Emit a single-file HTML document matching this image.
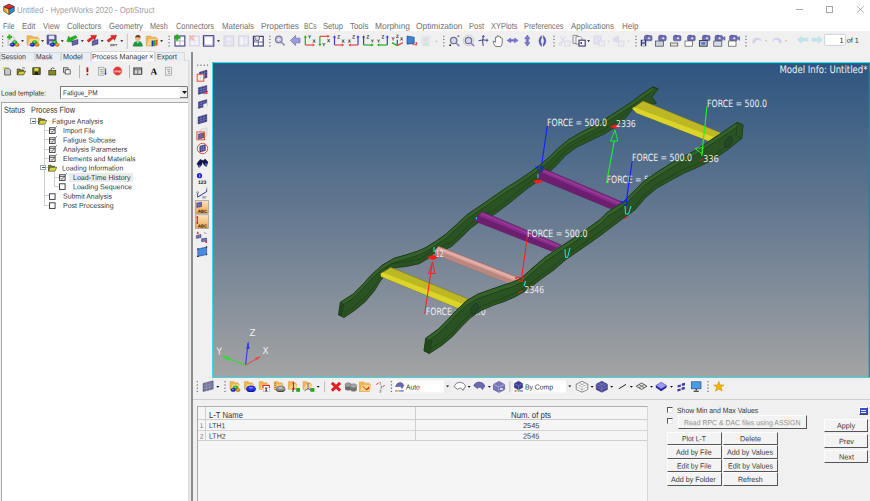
<!DOCTYPE html><html><head><meta charset="utf-8"><title>Untitled - HyperWorks 2020 - OptiStruct</title><style>
html,body{margin:0;padding:0;background:#f0f0f0;}
body{width:870px;height:501px;overflow:hidden;font-family:"Liberation Sans",sans-serif;}
#app{position:relative;width:870px;height:501px;overflow:hidden;background:#f0f0f0;}
#app div,#app svg{position:absolute;box-sizing:border-box;}
.t{position:absolute;white-space:nowrap;transform-origin:0 50%;}
.btn{background:#f3f3f3;border-top:1px solid #fdfdfd;border-left:1px solid #fdfdfd;border-right:1.1px solid #555;border-bottom:1.1px solid #555;}

</style></head><body>
<div id="app">
<div style="left:0px;top:0px;width:870px;height:31px;background:#fff;"></div>
<div style="left:796px;top:8.7px;width:6.8px;height:0.8px;background:#aaa;"></div>
<div style="left:826.2px;top:6.2px;width:6.8px;height:6.4px;border:0.8px solid #a4a4a4;border-radius:0.6px;"></div>
<svg style="left:856px;top:5px" width="10" height="10" viewBox="0 0 10 10"><path d="M1 1.2L7.8 7.6M7.8 1.2L1 7.6" stroke="#8c8c8c" stroke-width="0.7" fill="none"/></svg>
<div style="left:0px;top:52px;width:190px;height:9px;background:#f0f0f0;border-bottom:1px solid #dcdcdc;"></div>
<div style="left:0px;top:52px;width:35px;height:9px;background:#e9eef4;border:1px solid #d4dae2;border-bottom:none;"></div>
<div style="left:35px;top:52px;width:26px;height:9px;background:#e9eef4;border:1px solid #d4dae2;border-bottom:none;"></div>
<div style="left:61px;top:52px;width:30px;height:9px;background:#e9eef4;border:1px solid #d4dae2;border-bottom:none;"></div>
<div style="left:155px;top:52px;width:30px;height:9px;background:#e9eef4;border:1px solid #d4dae2;border-bottom:none;"></div>
<div style="left:91px;top:51px;width:64px;height:10px;background:#fff;border:1px solid #d9d9d9;border-bottom:none;"></div>
<div style="left:188px;top:60px;width:2px;height:441px;background:#dcdfe3;"></div>
<div style="left:191.2px;top:52px;width:1.8px;height:449px;background:#8c8c8c;"></div>
<div style="left:78.5px;top:65px;width:1px;height:13px;background:#b5b5b5;"></div>
<div style="left:129px;top:65px;width:1px;height:13px;background:#b5b5b5;"></div>
<div style="left:60px;top:85.5px;width:128px;height:13.5px;background:#fff;border:1px solid #7a7a7a;border-right-color:#d0d0d0;border-bottom-color:#d0d0d0;"></div>
<div style="left:180px;top:87px;width:7.5px;height:11px;background:#f0f0f0;border-right:1px solid #777;border-bottom:1px solid #777;"></div>
<svg style="left:181.5px;top:91px" width="5" height="3" viewBox="0 0 5 3"><path d="M0 0H5L2.5 3Z" fill="#111"/></svg>
<div style="left:1px;top:102px;width:187px;height:399px;background:#fff;border-left:1px solid #a8a8a8;border-top:1px solid #a8a8a8;"></div>
<div style="left:68.9px;top:172.8px;width:64px;height:9px;background:#ebebeb;"></div>
<div style="left:44px;top:125px;width:1px;height:80.5px;background:#cfcfcf;"></div>
<div style="left:44px;top:129.9px;width:5px;height:1px;background:#cfcfcf;"></div>
<div style="left:44px;top:139.2px;width:5px;height:1px;background:#cfcfcf;"></div>
<div style="left:44px;top:148.6px;width:5px;height:1px;background:#cfcfcf;"></div>
<div style="left:44px;top:157.9px;width:5px;height:1px;background:#cfcfcf;"></div>
<div style="left:44px;top:195.4px;width:5px;height:1px;background:#cfcfcf;"></div>
<div style="left:44px;top:204.7px;width:5px;height:1px;background:#cfcfcf;"></div>
<div style="left:54px;top:172px;width:1px;height:15px;background:#cfcfcf;"></div>
<div style="left:54px;top:177px;width:5px;height:1px;background:#cfcfcf;"></div>
<div style="left:54px;top:186.2px;width:5px;height:1px;background:#cfcfcf;"></div>
<div style="left:36px;top:120.5px;width:3px;height:1px;background:#cfcfcf;"></div>
<div style="left:46px;top:167.3px;width:3px;height:1px;background:#cfcfcf;"></div>
<div style="left:30.2px;top:118.2px;width:5.6px;height:5.6px;background:#fff;border:1px solid #9aa;"></div>
<div style="left:31.5px;top:120.6px;width:3px;height:0.8px;background:#357;"></div>
<div style="left:40.2px;top:164.89999999999998px;width:5.6px;height:5.6px;background:#fff;border:1px solid #9aa;"></div>
<div style="left:41.5px;top:167.29999999999998px;width:3px;height:0.8px;background:#357;"></div>
<svg style="left:38px;top:117px" width="9" height="8" viewBox="0 0 9 8"><path d="M0.3 1.2H3L3.8 2.2H6.5V3.3H2.2L0.3 7Z" fill="#8a8a10" stroke="#333" stroke-width="0.6"/><path d="M2.2 3.3H8.8L6.8 7.2H0.3Z" fill="#d8d83a" stroke="#333" stroke-width="0.6"/></svg>
<svg style="left:48px;top:163.7px" width="9" height="8" viewBox="0 0 9 8"><path d="M0.3 1.2H3L3.8 2.2H6.5V3.3H2.2L0.3 7Z" fill="#8a8a10" stroke="#333" stroke-width="0.6"/><path d="M2.2 3.3H8.8L6.8 7.2H0.3Z" fill="#d8d83a" stroke="#333" stroke-width="0.6"/></svg>
<svg style="left:48.6px;top:126.2px" width="8.5" height="8" viewBox="0 0 8.5 8"><rect x="0.5" y="1.8" width="5.6" height="5.6" fill="#fff" stroke="#333" stroke-width="0.9"/><path d="M0.5 3.6H6M1.8 5.2L3 6.4L5 4.2" stroke="#333" stroke-width="0.8" fill="none"/><path d="M6.5 1.6L7.8 0.4" stroke="#333" stroke-width="0.8"/></svg>
<svg style="left:48.6px;top:135.5px" width="8.5" height="8" viewBox="0 0 8.5 8"><rect x="0.5" y="1.8" width="5.6" height="5.6" fill="#fff" stroke="#333" stroke-width="0.9"/><path d="M0.5 3.6H6M1.8 5.2L3 6.4L5 4.2" stroke="#333" stroke-width="0.8" fill="none"/><path d="M6.5 1.6L7.8 0.4" stroke="#333" stroke-width="0.8"/></svg>
<svg style="left:48.6px;top:144.9px" width="8.5" height="8" viewBox="0 0 8.5 8"><rect x="0.5" y="1.8" width="5.6" height="5.6" fill="#fff" stroke="#333" stroke-width="0.9"/><path d="M0.5 3.6H6M1.8 5.2L3 6.4L5 4.2" stroke="#333" stroke-width="0.8" fill="none"/><path d="M6.5 1.6L7.8 0.4" stroke="#333" stroke-width="0.8"/></svg>
<svg style="left:48.6px;top:154.20000000000002px" width="8.5" height="8" viewBox="0 0 8.5 8"><rect x="0.5" y="1.8" width="5.6" height="5.6" fill="#fff" stroke="#333" stroke-width="0.9"/><path d="M0.5 3.6H6M1.8 5.2L3 6.4L5 4.2" stroke="#333" stroke-width="0.8" fill="none"/><path d="M6.5 1.6L7.8 0.4" stroke="#333" stroke-width="0.8"/></svg>
<svg style="left:58.6px;top:173.10000000000002px" width="8.5" height="8" viewBox="0 0 8.5 8"><rect x="0.5" y="1.8" width="5.6" height="5.6" fill="#fff" stroke="#333" stroke-width="0.9"/><path d="M0.5 3.6H6M1.8 5.2L3 6.4L5 4.2" stroke="#333" stroke-width="0.8" fill="none"/><path d="M6.5 1.6L7.8 0.4" stroke="#333" stroke-width="0.8"/></svg>
<svg style="left:58.6px;top:182.4px" width="8.5" height="8" viewBox="0 0 8.5 8"><rect x="0.5" y="1.8" width="5.6" height="5.6" fill="#fff" stroke="#333" stroke-width="0.9"/></svg>
<svg style="left:48.6px;top:191.70000000000002px" width="8.5" height="8" viewBox="0 0 8.5 8"><rect x="0.5" y="1.8" width="5.6" height="5.6" fill="#fff" stroke="#333" stroke-width="0.9"/></svg>
<svg style="left:48.6px;top:201.0px" width="8.5" height="8" viewBox="0 0 8.5 8"><rect x="0.5" y="1.8" width="5.6" height="5.6" fill="#fff" stroke="#333" stroke-width="0.9"/></svg>
<svg style="left:212px;top:62px" width="658" height="316" viewBox="0 0 658 316" font-family="'DejaVu Sans','Liberation Sans',sans-serif"><defs><linearGradient id="bg" x1="0" y1="0" x2="0" y2="1"><stop offset="0" stop-color="#2d5580"/><stop offset="0.5" stop-color="#677a91"/><stop offset="1" stop-color="#a3a4a4"/></linearGradient></defs><rect x="0" y="0" width="658" height="316" fill="url(#bg)"/><path d="M658 0.5H0.5V315.5H658" fill="none" stroke="#38d8e2" stroke-width="1"/><path d="M1 1.5H658" fill="none" stroke="#236f8c" stroke-width="1" opacity="0.8"/><path d="M657.3 1V315" fill="none" stroke="#2a8098" stroke-width="1.2"/><text x="394.5" y="121.10" transform="rotate(0.03 394.5 117.5)" font-size="10" fill="#ececec" textLength="60.0" lengthAdjust="spacingAndGlyphs">FORCE = 500.0</text><text x="213.8" y="252.60" transform="rotate(0.03 213.8 249.0)" font-size="10" fill="#ececec" textLength="59.8" lengthAdjust="spacingAndGlyphs">FORCE = 500.0</text><polygon points="128.4,240.3 141.0,232.2 150.0,223.3 159.0,213.4 169.7,203.5 182.2,196.3 194.8,192.7 205.6,189.2 213.0,186.0 223.5,179.5 234.5,171.7 245.3,161.9 256.0,152.0 266.9,144.8 281.2,134.9 295.6,125.0 303.0,120.6 313.8,113.4 326.3,104.4 337.0,95.5 346.0,86.5 356.9,77.5 369.4,70.3 382.0,64.0 392.6,57.5 406.7,48.4 419.3,40.3 430.0,32.2 440.8,25.0 446.2,26.9 440.0,35.0 444.4,41.2 433.0,44.0 420.2,47.5 414.0,55.6 405.0,63.7 392.6,71.8 378.4,78.6 364.0,85.6 353.3,93.7 344.3,103.5 333.0,114.0 313.8,127.8 297.4,141.2 283.0,152.0 266.0,160.8 259.0,165.9 249.3,175.5 239.5,184.6 231.0,188.5 220.8,192.0 216.4,196.3 207.4,201.7 194.8,204.4 178.7,206.3 167.9,219.7 162.5,228.7 153.5,239.4 142.7,248.4 132.0,255.6 126.6,252.9" fill="#2a5222" stroke="#1b3a17" stroke-width="0.8" stroke-linejoin="round"/><polygon points="128.4,240.3 141.0,232.2 150.0,223.3 159.0,213.4 169.7,203.5 182.2,196.3 194.8,192.7 205.6,189.2 213.0,186.0 223.5,179.5 234.5,171.7 245.3,161.9 256.0,152.0 266.9,144.8 281.2,134.9 295.6,125.0 303.0,120.6 313.8,113.4 326.3,104.4 337.0,95.5 346.0,86.5 356.9,77.5 369.4,70.3 382.0,64.0 392.6,57.5 406.7,48.4 419.3,40.3 430.0,32.2 440.8,25.0 440.8,29.2 430.0,36.4 419.3,44.5 406.7,52.6 392.6,61.7 382.0,68.2 369.4,74.5 356.9,81.7 346.0,90.7 337.0,99.7 326.3,108.6 313.8,117.6 303.0,124.8 295.6,129.2 281.2,139.1 266.9,149.0 256.0,156.2 245.3,166.1 234.5,175.9 223.5,183.7 213.0,190.2 205.6,193.4 194.8,196.9 182.2,200.5 169.7,207.7 159.0,217.6 150.0,227.5 141.0,236.4 128.4,244.5" fill="#34622a" stroke="none" stroke-width="0.6" stroke-linejoin="round"/><polyline points="128.4,244.5 141.0,236.4 150.0,227.5 159.0,217.6 169.7,207.7 182.2,200.5 194.8,196.9 205.6,193.4 213.0,190.2 223.5,183.7 234.5,175.9 245.3,166.1 256.0,156.2 266.9,149.0 281.2,139.1 295.6,129.2 303.0,124.8 313.8,117.6 326.3,108.6 337.0,99.7 346.0,90.7 356.9,81.7 369.4,74.5 382.0,68.2 392.6,61.7 406.7,52.6 419.3,44.5 430.0,36.4 440.8,29.2" fill="none" stroke="#1b3a17" stroke-width="0.7" stroke-linejoin="round"/><polyline points="128.4,240.3 141.0,232.2 150.0,223.3 159.0,213.4 169.7,203.5 182.2,196.3 194.8,192.7 205.6,189.2 213.0,186.0 223.5,179.5 234.5,171.7 245.3,161.9 256.0,152.0 266.9,144.8 281.2,134.9 295.6,125.0 303.0,120.6 313.8,113.4 326.3,104.4 337.0,95.5 346.0,86.5 356.9,77.5 369.4,70.3 382.0,64.0 392.6,57.5 406.7,48.4 419.3,40.3 430.0,32.2 440.8,25.0 446.2,26.9" fill="none" stroke="#1b3a17" stroke-width="0.8" stroke-linejoin="round"/><polyline points="420.2,43.0 414.0,51.1 405.0,59.2 392.6,67.3 378.4,74.1 364.0,81.1 353.3,89.2 344.3,99.0 333.0,109.5 313.8,123.3 297.4,136.7 283.0,147.5 266.0,156.3 259.0,161.4 249.3,171.0 239.5,180.1 231.0,184.0 220.8,187.5 216.4,191.8 207.4,197.2 194.8,199.9 178.7,201.8 167.9,215.2 162.5,224.2 153.5,234.9 142.7,243.9 132.0,251.1" fill="none" stroke="#1b3a17" stroke-width="0.6" stroke-linejoin="round"/><polygon points="128.4,240.3 131.5,242.0 130.0,253.5 126.6,252.9" fill="#23481d" stroke="#1b3a17" stroke-width="0.5" stroke-linejoin="round"/><polygon points="332.6,107.0 410.0,140.0 399.5,147.0 327.2,117.0 325.4,113.4" fill="#8a2a8c" stroke="#4a154c" stroke-width="0.5" stroke-linejoin="round"/><polygon points="329.0,110.3 405.0,143.5 399.5,147.0 327.2,117.0 325.4,113.4" fill="#6c1f6e" stroke="none" stroke-width="0.6" stroke-linejoin="round"/><line x1="331.0" y1="108.5" x2="408.0" y2="141.6" stroke="#a855aa" stroke-width="0.6"/><polygon points="270.5,149.7 349.0,182.9 340.0,189.2 263.3,159.2 261.8,157.4" fill="#8a2a8c" stroke="#4a154c" stroke-width="0.5" stroke-linejoin="round"/><polygon points="266.0,153.5 344.5,186.0 340.0,189.2 263.3,159.2 261.8,157.4" fill="#6c1f6e" stroke="none" stroke-width="0.6" stroke-linejoin="round"/><line x1="269.0" y1="151.3" x2="347.0" y2="184.5" stroke="#a855aa" stroke-width="0.6"/><polygon points="226.5,184.3 309.0,216.5 300.0,222.5 223.5,192.5 222.5,189.0" fill="#d9a29c" stroke="#8a5a56" stroke-width="0.5" stroke-linejoin="round"/><polygon points="224.5,188.0 304.5,219.5 300.0,222.5 223.5,192.5" fill="#b98680" stroke="none" stroke-width="0.6" stroke-linejoin="round"/><line x1="225.5" y1="186.2" x2="307.0" y2="218.0" stroke="#f0c8c2" stroke-width="0.6"/><polygon points="431.0,38.9 510.0,71.2 500.0,80.2 424.7,51.0 420.2,46.6" fill="#bdb724" stroke="#6f6c18" stroke-width="0.5" stroke-linejoin="round"/><polygon points="422.0,45.3 504.5,76.0 500.0,80.2 424.7,51.0 420.2,46.6" fill="#dbd52a" stroke="none" stroke-width="0.6" stroke-linejoin="round"/><polygon points="178.7,205.3 257.8,237.6 247.0,246.6 169.0,214.5 168.8,211.6" fill="#bdb724" stroke="#6f6c18" stroke-width="0.5" stroke-linejoin="round"/><polygon points="171.0,210.6 251.5,242.0 247.0,246.6 169.0,214.5 168.8,211.6" fill="#dbd52a" stroke="none" stroke-width="0.6" stroke-linejoin="round"/><polygon points="213.8,276.2 226.3,267.2 235.3,258.3 244.3,248.4 255.0,238.5 265.8,232.2 278.4,227.7 291.0,223.3 300.0,220.5 309.5,216.0 320.3,206.2 332.9,195.5 347.2,185.6 359.8,177.5 374.2,167.6 388.0,157.7 396.0,149.8 410.3,140.8 422.9,128.3 431.9,119.3 440.8,113.0 453.4,105.0 466.0,97.2 483.9,88.3 498.3,78.4 510.8,70.3 525.2,60.4 531.0,63.1 529.7,76.6 516.2,87.4 501.9,97.2 487.5,104.4 471.3,111.6 457.0,119.3 444.4,126.5 433.7,135.5 422.9,148.0 410.3,157.0 396.0,167.8 388.0,173.9 368.8,187.4 354.4,197.2 341.9,208.0 329.3,217.0 315.0,228.0 303.0,234.9 292.8,239.4 282.0,243.0 269.4,248.4 258.7,255.6 249.7,264.6 240.7,274.4 229.9,283.4 217.4,291.5 212.0,288.8" fill="#2a5222" stroke="#1b3a17" stroke-width="0.8" stroke-linejoin="round"/><polygon points="213.8,276.2 226.3,267.2 235.3,258.3 244.3,248.4 255.0,238.5 265.8,232.2 278.4,227.7 291.0,223.3 300.0,220.5 309.5,216.0 320.3,206.2 332.9,195.5 347.2,185.6 359.8,177.5 374.2,167.6 388.0,157.7 396.0,149.8 410.3,140.8 422.9,128.3 431.9,119.3 440.8,113.0 453.4,105.0 466.0,97.2 483.9,88.3 498.3,78.4 510.8,70.3 525.2,60.4 525.2,64.9 510.8,74.8 498.3,82.9 483.9,92.8 466.0,101.7 453.4,109.5 440.8,117.5 431.9,123.8 422.9,132.8 410.3,145.3 396.0,154.3 388.0,162.2 374.2,172.1 359.8,182.0 347.2,190.1 332.9,200.0 320.3,210.7 309.5,220.5 300.0,225.0 291.0,227.8 278.4,232.2 265.8,236.7 255.0,243.0 244.3,252.9 235.3,262.8 226.3,271.7 213.8,280.7" fill="#34622a" stroke="none" stroke-width="0.6" stroke-linejoin="round"/><polyline points="213.8,280.7 226.3,271.7 235.3,262.8 244.3,252.9 255.0,243.0 265.8,236.7 278.4,232.2 291.0,227.8 300.0,225.0 309.5,220.5 320.3,210.7 332.9,200.0 347.2,190.1 359.8,182.0 374.2,172.1 388.0,162.2 396.0,154.3 410.3,145.3 422.9,132.8 431.9,123.8 440.8,117.5 453.4,109.5 466.0,101.7 483.9,92.8 498.3,82.9 510.8,74.8 525.2,64.9" fill="none" stroke="#1b3a17" stroke-width="0.7" stroke-linejoin="round"/><polyline points="213.8,276.2 226.3,267.2 235.3,258.3 244.3,248.4 255.0,238.5 265.8,232.2 278.4,227.7 291.0,223.3 300.0,220.5 309.5,216.0 320.3,206.2 332.9,195.5 347.2,185.6 359.8,177.5 374.2,167.6 388.0,157.7 396.0,149.8 410.3,140.8 422.9,128.3 431.9,119.3 440.8,113.0 453.4,105.0 466.0,97.2 483.9,88.3 498.3,78.4 510.8,70.3 525.2,60.4 531.0,63.1" fill="none" stroke="#1b3a17" stroke-width="0.8" stroke-linejoin="round"/><polyline points="516.2,83.4 501.9,93.2 487.5,100.4 471.3,107.6 457.0,115.3 444.4,122.5 433.7,131.5 422.9,144.0 410.3,153.0 396.0,163.8 388.0,169.9 368.8,183.4 354.4,193.2 341.9,204.0 329.3,213.0 315.0,224.0 303.0,230.9 292.8,235.4 282.0,239.0 269.4,244.4 258.7,251.6 249.7,260.6 240.7,270.4 229.9,279.4 217.4,287.5" fill="none" stroke="#1b3a17" stroke-width="0.6" stroke-linejoin="round"/><polygon points="213.8,276.2 217.4,278.9 220.0,278.0 217.4,291.5 212.0,288.8" fill="#23481d" stroke="#1b3a17" stroke-width="0.5" stroke-linejoin="round"/><polygon points="525.2,60.4 531.0,63.1 529.7,76.6 524.0,73.5" fill="#2a5222" stroke="#1b3a17" stroke-width="0.5" stroke-linejoin="round"/><ellipse cx="262.5" cy="247" rx="3.2" ry="5.8" transform="rotate(28 262.5 247)" fill="#25491f" stroke="#1b2f4a" stroke-width="0.6"/><ellipse cx="516.5" cy="80" rx="3.2" ry="5.8" transform="rotate(28 516.5 80)" fill="#25491f" stroke="#1b2f4a" stroke-width="0.6"/><line x1="335.3" y1="64.0" x2="329.0" y2="107.0" stroke="#1020ff" stroke-width="1.1"/><polygon points="323.6,105.0 331.7,105.0 329.0,110.0" fill="none" stroke="#1020ff" stroke-width="0.9" stroke-linejoin="round"/><polygon points="321.0,119.0 327.0,117.5 331.0,119.5 325.0,122.0" fill="#ff1a1a" stroke="none" stroke-width="0.6" stroke-linejoin="round"/><line x1="326.0" y1="112.0" x2="326.0" y2="116.0" stroke="#22e6e6" stroke-width="1"/><line x1="420.2" y1="99.0" x2="414.0" y2="140.8" stroke="#1020ff" stroke-width="1.1"/><polygon points="408.5,139.5 416.6,139.5 414.0,144.0" fill="none" stroke="#1020ff" stroke-width="0.9" stroke-linejoin="round"/><path d="M413 144L413.5 152L416.5 152L419 144" fill="none" stroke="#22e6e6" stroke-width="1"/><line x1="412.0" y1="156.5" x2="416.6" y2="155.0" stroke="#ff1a1a" stroke-width="1"/><line x1="394.5" y1="121.0" x2="402.3" y2="79.0" stroke="#22ee22" stroke-width="1.2"/><polygon points="403.0,68.0 398.6,79.0 405.8,79.0" fill="none" stroke="#22ee22" stroke-width="1.0" stroke-linejoin="round"/><polygon points="397.7,64.5 403.0,62.6 408.5,64.5 403.0,66.5" fill="#ff1a1a" stroke="none" stroke-width="0.6" stroke-linejoin="round"/><line x1="495.0" y1="44.3" x2="489.7" y2="93.7" stroke="#22ee22" stroke-width="1.2"/><polygon points="483.0,86.5 491.0,85.5 490.3,91.9" fill="none" stroke="#22ee22" stroke-width="1.0" stroke-linejoin="round"/><line x1="488.0" y1="99.0" x2="491.0" y2="97.0" stroke="#ff1a1a" stroke-width="1"/><line x1="315.3" y1="174.8" x2="309.5" y2="217.0" stroke="#ff1a1a" stroke-width="1.0"/><polygon points="303.0,216.0 312.0,215.0 310.0,220.0" fill="none" stroke="#ff1a1a" stroke-width="0.9" stroke-linejoin="round"/><line x1="313.5" y1="219.0" x2="312.0" y2="224.0" stroke="#22e6e6" stroke-width="1.1"/><line x1="306.0" y1="231.0" x2="310.0" y2="229.0" stroke="#ff1a1a" stroke-width="1"/><line x1="212.7" y1="251.6" x2="220.3" y2="201.0" stroke="#ff1a1a" stroke-width="1.0"/><polygon points="220.5,200.0 216.5,211.4 223.0,211.4" fill="none" stroke="#ff1a1a" stroke-width="0.9" stroke-linejoin="round"/><polygon points="215.0,195.5 221.0,193.0 227.0,195.0 221.0,198.0" fill="#ff1a1a" stroke="none" stroke-width="0.6" stroke-linejoin="round"/><line x1="222.0" y1="185.0" x2="222.0" y2="190.0" stroke="#22e6e6" stroke-width="1"/><line x1="264.3" y1="155.0" x2="264.3" y2="157.5" stroke="#22e6e6" stroke-width="1"/><path d="M353 187L353.5 195.5L355.5 195.5L358 186" fill="none" stroke="#22e6e6" stroke-width="1"/><text x="335.0" y="63.50" transform="rotate(0.03 335.0 59.9)" font-size="10" fill="#ececec" textLength="60.0" lengthAdjust="spacingAndGlyphs">FORCE = 500.0</text><text x="495.0" y="44.80" transform="rotate(0.03 495.0 41.2)" font-size="10" fill="#ececec" textLength="60.0" lengthAdjust="spacingAndGlyphs">FORCE = 500.0</text><text x="420.0" y="98.90" transform="rotate(0.03 420.0 95.3)" font-size="10" fill="#ececec" textLength="60.0" lengthAdjust="spacingAndGlyphs">FORCE = 500.0</text><text x="315.0" y="174.80" transform="rotate(0.03 315.0 171.2)" font-size="10" fill="#ececec" textLength="60.4" lengthAdjust="spacingAndGlyphs">FORCE = 500.0</text><text x="404.0" y="64.72" transform="rotate(0.03 404.0 61.3)" font-size="9.5" fill="#ececec" textLength="19.8" lengthAdjust="spacingAndGlyphs">2336</text><text x="491.0" y="100.32" transform="rotate(0.03 491.0 96.9)" font-size="9.5" fill="#ececec" textLength="15.9" lengthAdjust="spacingAndGlyphs">336</text><text x="312.6" y="230.92" transform="rotate(0.03 312.6 227.5)" font-size="9.5" fill="#ececec" textLength="19.4" lengthAdjust="spacingAndGlyphs">2346</text><text x="223.8" y="194.92" transform="rotate(0.03 223.8 191.5)" font-size="9.5" fill="#ececec" textLength="7.7" lengthAdjust="spacingAndGlyphs">12</text><text x="567.4" y="10.97" transform="rotate(0.03 567.4 7.3)" font-size="10.2" fill="#f2f2f2" textLength="88.1" lengthAdjust="spacingAndGlyphs">Model Info: Untitled*</text><line x1="33.6" y1="303.0" x2="36.0" y2="281.0" stroke="#2a3cf0" stroke-width="1.1"/><polygon points="36.2,279.0 34.3,287.0 37.6,287.0" fill="#2a3cf0" stroke="none" stroke-width="0.6" stroke-linejoin="round"/><line x1="33.6" y1="303.0" x2="10.5" y2="294.4" stroke="#2fdc2f" stroke-width="1.1"/><polygon points="9.3,293.8 17.5,295.0 16.3,298.6" fill="#2fdc2f" stroke="none" stroke-width="0.6" stroke-linejoin="round"/><line x1="33.6" y1="303.0" x2="48.0" y2="295.0" stroke="#e25050" stroke-width="1.1"/><polygon points="49.0,294.5 43.0,295.5 44.5,298.5" fill="#e25050" stroke="none" stroke-width="0.6" stroke-linejoin="round"/><text x="37.5" y="274.42" transform="rotate(0.03 37.5 271.0)" font-size="9.5" fill="#f0f0f0" textLength="6.0" lengthAdjust="spacingAndGlyphs">Z</text><text x="4.5" y="292.42" transform="rotate(0.03 4.5 289.0)" font-size="9.5" fill="#f0f0f0" textLength="5.5" lengthAdjust="spacingAndGlyphs">Y</text><text x="50.5" y="292.42" transform="rotate(0.03 50.5 289.0)" font-size="9.5" fill="#f0f0f0" textLength="6.0" lengthAdjust="spacingAndGlyphs">X</text></svg>
<div style="left:193px;top:399px;width:677px;height:1px;background:#cfcfcf;"></div>
<div style="left:197px;top:406px;width:450.5px;height:95px;background:#f5f5f5;border-left:1px solid #a8a8a8;border-top:1px solid #b0b0b0;border-right:1px solid #d8d8d8;"></div>
<div style="left:198px;top:419.2px;width:449px;height:1px;background:#cdcdcd;"></div>
<div style="left:198px;top:429.6px;width:449px;height:1px;background:#d4d4d4;"></div>
<div style="left:198px;top:440px;width:449px;height:1px;background:#cfcfcf;"></div>
<div style="left:205.2px;top:407px;width:1px;height:33.5px;background:#cfcfcf;"></div>
<div style="left:414.7px;top:407px;width:1px;height:33.5px;background:#cfcfcf;"></div>
<div style="left:667px;top:407px;width:6.2px;height:6.2px;background:#fff;border-top:1px solid #555;border-left:1px solid #555;border-right:1px solid #e8e8e8;border-bottom:1px solid #e8e8e8;"></div>
<div style="left:667px;top:417.6px;width:6.2px;height:6.2px;background:#fff;border-top:1px solid #555;border-left:1px solid #555;border-right:1px solid #e8e8e8;border-bottom:1px solid #e8e8e8;"></div>
<div class="btn" style="left:678px;top:415.4px;width:129.29999999999995px;height:13.400000000000034px"></div>
<div class="btn" style="left:667px;top:431.6px;width:54.5px;height:13.399999999999977px"></div>
<div class="btn" style="left:723.3px;top:431.6px;width:54.700000000000045px;height:13.399999999999977px"></div>
<div class="btn" style="left:667px;top:445.2px;width:54.5px;height:13.400000000000034px"></div>
<div class="btn" style="left:723.3px;top:445.2px;width:54.700000000000045px;height:13.400000000000034px"></div>
<div class="btn" style="left:667px;top:458.8px;width:54.5px;height:13.399999999999977px"></div>
<div class="btn" style="left:723.3px;top:458.8px;width:54.700000000000045px;height:13.399999999999977px"></div>
<div class="btn" style="left:667px;top:472.4px;width:54.5px;height:13.400000000000034px"></div>
<div class="btn" style="left:723.3px;top:472.4px;width:54.700000000000045px;height:13.400000000000034px"></div>
<div class="btn" style="left:823.5px;top:418.8px;width:44.700000000000045px;height:13.199999999999989px"></div>
<div class="btn" style="left:823.5px;top:434.4px;width:44.700000000000045px;height:13.200000000000045px"></div>
<div class="btn" style="left:823.5px;top:449.9px;width:44.700000000000045px;height:13.200000000000045px"></div>
<div style="left:859px;top:406.6px;width:8.5px;height:8.7px;background:#3c50c8;border-top:1px solid #fff;border-left:1px solid #fff;border-right:1px solid #444;border-bottom:1px solid #444;"></div>
<div style="left:860.5px;top:409.5px;width:5px;height:1px;background:#dfe6ff;"></div>
<div style="left:860.5px;top:411.5px;width:5px;height:1px;background:#dfe6ff;"></div>
<svg style="left:0;top:0" width="870" height="501" viewBox="0 0 870 501" font-family="'Liberation Sans',sans-serif"><path d="M9 4.1L14.3 6.4V11.2L9 14.8L3.7 11.2V6.4Z" fill="#333" stroke="#333" stroke-width="0.5" opacity="1" /><path d="M9 4.4L13.8 6.5L9 8.8L4.2 6.5Z" fill="#e02626" stroke="none" stroke-width="0.7" opacity="1" /><path d="M9.4 9.4L13.9 7.2V11L9.4 14.2Z" fill="#2a8ad8" stroke="none" stroke-width="0.7" opacity="1" /><path d="M8.6 9.4L4.1 7.2V11L8.6 14.2Z" fill="#f0b020" stroke="none" stroke-width="0.7" opacity="1" /><path d="M7 8.6Q8 11 7 13" fill="none" stroke="#fff" stroke-width="0.7" opacity="0.7" /><rect x="2.0" y="35.7" width="1.2" height="1.2" fill="#6e6e6e" stroke="none" stroke-width="0.6" rx="0" opacity="1"/><rect x="2.0" y="38.8" width="1.2" height="1.2" fill="#6e6e6e" stroke="none" stroke-width="0.6" rx="0" opacity="1"/><rect x="2.0" y="42.1" width="1.2" height="1.2" fill="#6e6e6e" stroke="none" stroke-width="0.6" rx="0" opacity="1"/><rect x="2.0" y="45.4" width="1.2" height="1.2" fill="#6e6e6e" stroke="none" stroke-width="0.6" rx="0" opacity="1"/><path d="M8 36H12.5L14.8 38.3V45.3H8Z" fill="#e6e6ea" stroke="#9a9aa6" stroke-width="0.5" opacity="1" /><path d="M9.5 34.6V39.6M7 37.1H12" fill="none" stroke="#35b020" stroke-width="1.9" opacity="1" /><ellipse cx="14.7" cy="42.3" rx="2.4" ry="1.7" fill="#1cc41c" stroke="#0a7a0a" stroke-width="0.4"/><ellipse cx="14.4" cy="41.8" rx="1.0" ry="0.5" fill="#8af08a" stroke="none" stroke-width="0.4"/><ellipse cx="12.4" cy="44.7" rx="2.4" ry="1.7" fill="#1a24dc" stroke="#0a0a80" stroke-width="0.4"/><ellipse cx="12.1" cy="44.2" rx="1.0" ry="0.5" fill="#8a90f8" stroke="none" stroke-width="0.4"/><ellipse cx="17.1" cy="44.8" rx="2.2" ry="1.6" fill="#e08a10" stroke="#8a5008" stroke-width="0.4"/><ellipse cx="16.8" cy="44.3" rx="0.9" ry="0.45" fill="#f8d08a" stroke="none" stroke-width="0.4"/><path d="M21.0 40.3H24.0L22.5 42.1Z" fill="#111" stroke="none" stroke-width="0.7" opacity="1" /><path d="M27 35.8H32.0L33.25 37.0H37.625V45.0H27Z" fill="#f0b850" stroke="#c89030" stroke-width="0.4" opacity="1" /><path d="M27.3 45.0L29.5 38.3H39.5L37.625 45.0Z" fill="#fbd987" stroke="#d8a040" stroke-width="0.4" opacity="1" /><ellipse cx="34.7" cy="42.3" rx="2.4" ry="1.7" fill="#1cc41c" stroke="#0a7a0a" stroke-width="0.4"/><ellipse cx="34.4" cy="41.8" rx="1.0" ry="0.5" fill="#8af08a" stroke="none" stroke-width="0.4"/><ellipse cx="32.4" cy="44.7" rx="2.4" ry="1.7" fill="#1a24dc" stroke="#0a0a80" stroke-width="0.4"/><ellipse cx="32.1" cy="44.2" rx="1.0" ry="0.5" fill="#8a90f8" stroke="none" stroke-width="0.4"/><ellipse cx="37.1" cy="44.8" rx="2.2" ry="1.6" fill="#e08a10" stroke="#8a5008" stroke-width="0.4"/><ellipse cx="36.8" cy="44.3" rx="0.9" ry="0.45" fill="#f8d08a" stroke="none" stroke-width="0.4"/><path d="M41.0 40.3H44.0L42.5 42.1Z" fill="#111" stroke="none" stroke-width="0.7" opacity="1" /><rect x="47.0" y="35.0" width="9.2" height="9.3" fill="#5a5aa6" stroke="#3a3a7a" stroke-width="0.5" rx="0.6" opacity="1"/><rect x="48.8" y="35.6" width="5.6" height="3.6" fill="#e4e4f4" stroke="none" stroke-width="0.6" rx="0" opacity="1"/><rect x="49.3" y="41.2" width="4.2" height="3.0" fill="#c8c8e0" stroke="none" stroke-width="0.6" rx="0" opacity="1"/><ellipse cx="54.7" cy="42.3" rx="2.4" ry="1.7" fill="#1cc41c" stroke="#0a7a0a" stroke-width="0.4"/><ellipse cx="54.4" cy="41.8" rx="1.0" ry="0.5" fill="#8af08a" stroke="none" stroke-width="0.4"/><ellipse cx="52.4" cy="44.7" rx="2.4" ry="1.7" fill="#1a24dc" stroke="#0a0a80" stroke-width="0.4"/><ellipse cx="52.1" cy="44.2" rx="1.0" ry="0.5" fill="#8a90f8" stroke="none" stroke-width="0.4"/><ellipse cx="57.1" cy="44.8" rx="2.2" ry="1.6" fill="#e08a10" stroke="#8a5008" stroke-width="0.4"/><ellipse cx="56.8" cy="44.3" rx="0.9" ry="0.45" fill="#f8d08a" stroke="none" stroke-width="0.4"/><path d="M60.8 40.3H63.8L62.3 42.1Z" fill="#111" stroke="none" stroke-width="0.7" opacity="1" /><path d="M75.6 35.4L77.2 37.4L71.8 40.6L73 42.2L66.8 41.6L68.6 36L69.8 38Z" fill="#22b022" stroke="#0c7a0c" stroke-width="0.4" opacity="1" /><path d="M72.2 41.0L78.0 39.4V44.0L72.2 45.6Z" fill="#3c3c8a" stroke="#2a2a60" stroke-width="0.4" opacity="1" /><path d="M74.1 40.5V45.1" fill="none" stroke="#9a9ad0" stroke-width="0.45" opacity="1" /><path d="M72.2 42.5L78.0 40.9" fill="none" stroke="#9a9ad0" stroke-width="0.45" opacity="1" /><path d="M76.1 39.9V44.5" fill="none" stroke="#9a9ad0" stroke-width="0.45" opacity="1" /><path d="M72.2 44.1L78.0 42.5" fill="none" stroke="#9a9ad0" stroke-width="0.45" opacity="1" /><path d="M80.8 40.3H83.8L82.3 42.1Z" fill="#111" stroke="none" stroke-width="0.7" opacity="1" /><path d="M87 40.2L88.6 42.2L93.4 38.6L94.6 40.4L96.6 35.2L90.6 35.4L91.8 37Z" fill="#e02828" stroke="#901010" stroke-width="0.4" opacity="1" /><path d="M92.2 41.0L98.0 39.4V44.0L92.2 45.6Z" fill="#3c3c8a" stroke="#2a2a60" stroke-width="0.4" opacity="1" /><path d="M94.1 40.5V45.1" fill="none" stroke="#9a9ad0" stroke-width="0.45" opacity="1" /><path d="M92.2 42.5L98.0 40.9" fill="none" stroke="#9a9ad0" stroke-width="0.45" opacity="1" /><path d="M96.1 39.9V44.5" fill="none" stroke="#9a9ad0" stroke-width="0.45" opacity="1" /><path d="M92.2 44.1L98.0 42.5" fill="none" stroke="#9a9ad0" stroke-width="0.45" opacity="1" /><path d="M100.6 40.3H103.6L102.1 42.1Z" fill="#111" stroke="none" stroke-width="0.7" opacity="1" /><path d="M107 40.2L108.6 42.2L113.4 38.6L114.6 40.4L116.6 35.2L110.6 35.4L111.8 37Z" fill="#e02828" stroke="#901010" stroke-width="0.4" opacity="1" /><text x="110.2" y="46.60" transform="rotate(0.03 110.2 46.6)" font-size="3.6" fill="#444" font-weight="bold" text-anchor="start" opacity="1">PPT</text><path d="M120.3 40.3H123.3L121.8 42.1Z" fill="#111" stroke="none" stroke-width="0.7" opacity="1" /><rect x="126.8" y="33.6" width="1.0" height="15.4" fill="#c6c6c6" stroke="none" stroke-width="0.6" rx="0" opacity="1"/><circle cx="137.8" cy="38.0" r="2.7" fill="#e8b890" stroke="none" stroke-width="0.6" opacity="1"/><path d="M135.1 37.6Q135.3 34.8 138 35Q140.8 35 140.5 38Q139 36.6 135.1 37.6Z" fill="#6a3c14" stroke="none" stroke-width="0.7" opacity="1" /><path d="M133.2 46.2Q133.2 41.4 137.8 41.2Q142.4 41.4 142.4 46.2Z" fill="#1e9a3c" stroke="#0c6a24" stroke-width="0.4" opacity="1" /><path d="M136.4 41.4L137.8 43.4L139.2 41.4Z" fill="#f4f4f4" stroke="none" stroke-width="0.7" opacity="1" /><path d="M146.2 36H150.83999999999997L152.0 37.2H156.06V45.8H146.2Z" fill="#f0b850" stroke="#c89030" stroke-width="0.4" opacity="1" /><path d="M146.5 45.8L148.7 38.5H157.79999999999998L156.06 45.8Z" fill="#fbd987" stroke="#d8a040" stroke-width="0.4" opacity="1" /><rect x="151.6" y="40.6" width="2.0" height="5.6" fill="#1828d8" stroke="none" stroke-width="0.6" rx="0" opacity="1"/><rect x="153.6" y="40.2" width="2.0" height="5.6" fill="#20b020" stroke="none" stroke-width="0.6" rx="0" opacity="1"/><rect x="155.6" y="39.8" width="2.0" height="5.6" fill="#f05a18" stroke="none" stroke-width="0.6" rx="0" opacity="1"/><path d="M160.1 40.3H163.1L161.6 42.1Z" fill="#111" stroke="none" stroke-width="0.7" opacity="1" /><rect x="168.5" y="35.7" width="1.2" height="1.2" fill="#6e6e6e" stroke="none" stroke-width="0.6" rx="0" opacity="1"/><rect x="168.5" y="38.8" width="1.2" height="1.2" fill="#6e6e6e" stroke="none" stroke-width="0.6" rx="0" opacity="1"/><rect x="168.5" y="42.1" width="1.2" height="1.2" fill="#6e6e6e" stroke="none" stroke-width="0.6" rx="0" opacity="1"/><rect x="168.5" y="45.4" width="1.2" height="1.2" fill="#6e6e6e" stroke="none" stroke-width="0.6" rx="0" opacity="1"/><rect x="175.0" y="36.0" width="9.8" height="10.0" fill="#fff" stroke="#4a4a88" stroke-width="1.2" rx="0" opacity="1"/><path d="M179.9 36V46M175 41H184.8" fill="none" stroke="#8a8ab8" stroke-width="0.6" opacity="1" /><path d="M177.2 34.4V40.8M174 37.6H180.4" fill="none" stroke="#2aa81e" stroke-width="2.1" opacity="1" /><rect x="189.8" y="36.2" width="9.4" height="9.6" fill="#f2f2f8" stroke="#d4d4e2" stroke-width="1.2" rx="0" opacity="1"/><path d="M194.5 36V46M190 41H199" fill="none" stroke="#dcdce8" stroke-width="0.6" opacity="1" /><path d="M189.4 35.4L194 40.4M194 35.4L189.4 40.4" fill="none" stroke="#f2b6b6" stroke-width="1.6" opacity="1" /><rect x="203.4" y="35.7" width="10.4" height="10.4" fill="#fff" stroke="#3c3c78" stroke-width="1.1" rx="0" opacity="1"/><rect x="204.5" y="36.8" width="8.2" height="8.2" fill="none" stroke="#b0b0e0" stroke-width="0.8" rx="0" opacity="1"/><path d="M217.0 40.3H220.0L218.5 42.1Z" fill="#111" stroke="none" stroke-width="0.7" opacity="1" /><rect x="224.0" y="36.0" width="9.8" height="10.0" fill="#e4e4ee" stroke="#d4d4e2" stroke-width="1.0" rx="0" opacity="1"/><path d="M227 39H231M229 37V41M227.5 43.5H230.5" fill="none" stroke="#f6f6fa" stroke-width="0.9" opacity="1" /><rect x="238.5" y="36.0" width="10.0" height="10.0" fill="#e4e4ee" stroke="#d4d4e2" stroke-width="1.0" rx="0" opacity="1"/><rect x="240.4" y="37.2" width="2.6" height="7.6" fill="#f6f6fa" stroke="none" stroke-width="0.6" rx="0" opacity="1"/><rect x="244.6" y="38.6" width="2.4" height="4.6" fill="#eeeef6" stroke="none" stroke-width="0.6" rx="0" opacity="1"/><rect x="253.4" y="36.4" width="9.8" height="9.6" fill="#fff" stroke="#3a3a7c" stroke-width="1.2" rx="0" opacity="1"/><path d="M258.3 40V46M253.4 42H263.2" fill="none" stroke="#3a3a7c" stroke-width="0.7" opacity="1" /><circle cx="257.2" cy="38.2" r="2.4" fill="#d8d8e4" stroke="#6e6e7e" stroke-width="1.0" opacity="1"/><path d="M255.2 39.8L253.4 41.4" fill="none" stroke="#6e6e7e" stroke-width="1.1" opacity="1" /><rect x="269.3" y="35.7" width="1.2" height="1.2" fill="#6e6e6e" stroke="none" stroke-width="0.6" rx="0" opacity="1"/><rect x="269.3" y="38.8" width="1.2" height="1.2" fill="#6e6e6e" stroke="none" stroke-width="0.6" rx="0" opacity="1"/><rect x="269.3" y="42.1" width="1.2" height="1.2" fill="#6e6e6e" stroke="none" stroke-width="0.6" rx="0" opacity="1"/><rect x="269.3" y="45.4" width="1.2" height="1.2" fill="#6e6e6e" stroke="none" stroke-width="0.6" rx="0" opacity="1"/><circle cx="278.8" cy="39.4" r="3.3" fill="#c4c4e0" stroke="#7c7ca4" stroke-width="1.2" opacity="1"/><path d="M281.4 42.2L284.6 45.4" fill="none" stroke="#8a8ac0" stroke-width="1.6" opacity="1" /><path d="M277 39.4H280.6M278.8 37.6V41.2" fill="none" stroke="#f4f4ff" stroke-width="0.7" opacity="1" /><path d="M290.4 40.5L295.6 35.4V38.2H300V42.8H295.6V45.6Z" fill="#9c9cdc" stroke="#6c6cbc" stroke-width="0.7" opacity="1" /><path d="M305.3 45V36.7" fill="none" stroke="#18b418" stroke-width="1.2" opacity="1" /><path d="M303.7 37.6L305.3 35.2L306.90000000000003 37.6Z" fill="#18b418" stroke="none" stroke-width="0.7" opacity="1" /><path d="M305.3 45H313.5" fill="none" stroke="#e04848" stroke-width="1.2" opacity="1" /><path d="M312.6 43.5L315 45L312.6 46.5Z" fill="#e04848" stroke="none" stroke-width="0.7" opacity="1" /><text x="309.6" y="38.40" transform="rotate(0.03 309.6 38.4)" font-size="4.6" fill="#222" font-weight="bold" text-anchor="middle" opacity="1">Y</text><text x="314.0" y="42.70" transform="rotate(0.03 314.0 42.7)" font-size="4.6" fill="#222" font-weight="bold" text-anchor="middle" opacity="1">X</text><path d="M319.9 36.3V44.8" fill="none" stroke="#18b418" stroke-width="1.2" opacity="1" /><path d="M318.29999999999995 43.9L319.9 46.3L321.5 43.9Z" fill="#18b418" stroke="none" stroke-width="0.7" opacity="1" /><path d="M319.9 36.3H328.3" fill="none" stroke="#e04848" stroke-width="1.2" opacity="1" /><path d="M327.40000000000003 34.8L329.8 36.3L327.40000000000003 37.8Z" fill="#e04848" stroke="none" stroke-width="0.7" opacity="1" /><text x="328.6" y="42.20" transform="rotate(0.03 328.6 42.2)" font-size="4.6" fill="#222" font-weight="bold" text-anchor="middle" opacity="1">X</text><text x="323.9" y="46.30" transform="rotate(0.03 323.9 46.3)" font-size="4.6" fill="#222" font-weight="bold" text-anchor="middle" opacity="1">Y</text><path d="M334.5 45V36.7" fill="none" stroke="#3a3ae0" stroke-width="1.2" opacity="1" /><path d="M332.9 37.6L334.5 35.2L336.1 37.6Z" fill="#3a3ae0" stroke="none" stroke-width="0.7" opacity="1" /><path d="M334.5 45H342.7" fill="none" stroke="#e04848" stroke-width="1.2" opacity="1" /><path d="M341.8 43.5L344.2 45L341.8 46.5Z" fill="#e04848" stroke="none" stroke-width="0.7" opacity="1" /><text x="338.6" y="38.40" transform="rotate(0.03 338.6 38.4)" font-size="4.6" fill="#222" font-weight="bold" text-anchor="middle" opacity="1">Z</text><text x="343.0" y="42.70" transform="rotate(0.03 343.0 42.7)" font-size="4.6" fill="#222" font-weight="bold" text-anchor="middle" opacity="1">X</text><path d="M358 45V36.7" fill="none" stroke="#3a3ae0" stroke-width="1.2" opacity="1" /><path d="M356.4 37.6L358 35.2L359.6 37.6Z" fill="#3a3ae0" stroke="none" stroke-width="0.7" opacity="1" /><path d="M358 45H349.8" fill="none" stroke="#e04848" stroke-width="1.2" opacity="1" /><path d="M350.7 43.5L348.3 45L350.7 46.5Z" fill="#e04848" stroke="none" stroke-width="0.7" opacity="1" /><text x="353.7" y="38.40" transform="rotate(0.03 353.7 38.4)" font-size="4.6" fill="#222" font-weight="bold" text-anchor="middle" opacity="1">Z</text><text x="349.4" y="42.70" transform="rotate(0.03 349.4 42.7)" font-size="4.6" fill="#222" font-weight="bold" text-anchor="middle" opacity="1">X</text><path d="M363.6 45V36.7" fill="none" stroke="#3a3ae0" stroke-width="1.2" opacity="1" /><path d="M362.0 37.6L363.6 35.2L365.20000000000005 37.6Z" fill="#3a3ae0" stroke="none" stroke-width="0.7" opacity="1" /><path d="M363.6 45H372.3" fill="none" stroke="#18b418" stroke-width="1.2" opacity="1" /><path d="M371.40000000000003 43.5L373.8 45L371.40000000000003 46.5Z" fill="#18b418" stroke="none" stroke-width="0.7" opacity="1" /><text x="367.8" y="38.40" transform="rotate(0.03 367.8 38.4)" font-size="4.6" fill="#222" font-weight="bold" text-anchor="middle" opacity="1">Z</text><text x="372.3" y="42.70" transform="rotate(0.03 372.3 42.7)" font-size="4.6" fill="#222" font-weight="bold" text-anchor="middle" opacity="1">Y</text><path d="M387.3 45V36.7" fill="none" stroke="#3a3ae0" stroke-width="1.2" opacity="1" /><path d="M385.7 37.6L387.3 35.2L388.90000000000003 37.6Z" fill="#3a3ae0" stroke="none" stroke-width="0.7" opacity="1" /><path d="M387.3 45H378.5" fill="none" stroke="#18b418" stroke-width="1.2" opacity="1" /><path d="M379.4 43.5L377 45L379.4 46.5Z" fill="#18b418" stroke="none" stroke-width="0.7" opacity="1" /><text x="382.8" y="38.40" transform="rotate(0.03 382.8 38.4)" font-size="4.6" fill="#222" font-weight="bold" text-anchor="middle" opacity="1">Z</text><text x="378.6" y="42.70" transform="rotate(0.03 378.6 42.7)" font-size="4.6" fill="#222" font-weight="bold" text-anchor="middle" opacity="1">Y</text><path d="M397.3 45.6V39.8" fill="none" stroke="#3a3ae0" stroke-width="1.2" opacity="1" /><path d="M397.3 45.6L392 42.6" fill="none" stroke="#18b418" stroke-width="1.3" opacity="1" /><path d="M397.3 45.6L402.8 42.6" fill="none" stroke="#e04848" stroke-width="1.3" opacity="1" /><text x="393.0" y="40.60" transform="rotate(0.03 393.0 40.6)" font-size="4.6" fill="#222" font-weight="bold" text-anchor="middle" opacity="1">Y</text><text x="397.3" y="38.00" transform="rotate(0.03 397.3 38.0)" font-size="4.6" fill="#222" font-weight="bold" text-anchor="middle" opacity="1">Z</text><text x="401.6" y="40.60" transform="rotate(0.03 401.6 40.6)" font-size="4.6" fill="#222" font-weight="bold" text-anchor="middle" opacity="1">X</text><path d="M407 36L414.2 37.2V43.4L407 44.2Z" fill="#3c84d0" stroke="#1c3c78" stroke-width="0.6" opacity="1" /><path d="M412 44.2Q414.5 46.4 417.4 43L415.8 42.6L416.6 45.4" fill="#e01818" stroke="#e01818" stroke-width="0.5" opacity="1" /><rect x="421.0" y="35.6" width="9.6" height="7.6" fill="#dfe8f0" stroke="none" stroke-width="0.6" rx="0" opacity="1"/><circle cx="425.8" cy="39.6" r="2" fill="#ecd8cc" stroke="none" stroke-width="0.6" opacity="1"/><path d="M422.2 46Q422.2 42.4 425.8 42.4Q429.4 42.4 429.4 46Z" fill="#cfe6d4" stroke="none" stroke-width="0.7" opacity="1" /><path d="M435 40.8H437.6L436.3 42.2Z" fill="#b8b8b8" stroke="none" stroke-width="0.7" opacity="1" /><rect x="443.2" y="35.7" width="1.2" height="1.2" fill="#6e6e6e" stroke="none" stroke-width="0.6" rx="0" opacity="1"/><rect x="443.2" y="38.8" width="1.2" height="1.2" fill="#6e6e6e" stroke="none" stroke-width="0.6" rx="0" opacity="1"/><rect x="443.2" y="42.1" width="1.2" height="1.2" fill="#6e6e6e" stroke="none" stroke-width="0.6" rx="0" opacity="1"/><rect x="443.2" y="45.4" width="1.2" height="1.2" fill="#6e6e6e" stroke="none" stroke-width="0.6" rx="0" opacity="1"/><circle cx="453.7" cy="40.5" r="3.2" fill="#d4d4fc" stroke="#74748c" stroke-width="1.3" opacity="1"/><path d="M456.2 43.2L459.4 46.2" fill="none" stroke="#8a8ac0" stroke-width="1.6" opacity="1" /><circle cx="450.2" cy="45.2" r="0.9" fill="#111" stroke="none" stroke-width="0.6" opacity="1"/><rect x="457.4" y="35.6" width="2.0" height="1.0" fill="#333" stroke="none" stroke-width="0.6" rx="0" opacity="1"/><circle cx="468.5" cy="40.5" r="5.3" fill="none" stroke="#a8a8a8" stroke-width="0.5" opacity="1"/><circle cx="468.5" cy="40.5" r="3.2" fill="#d4d4fc" stroke="#74748c" stroke-width="1.3" opacity="1"/><path d="M471 43.2L474.2 46.2" fill="none" stroke="#8a8ac0" stroke-width="1.6" opacity="1" /><path d="M478.6 40.8Q483 39.4 487.8 40.4M483.4 35.6Q482 40.6 483.2 46" fill="none" stroke="#46469a" stroke-width="1.1" opacity="1" /><path d="M486.4 39L488.2 40.4L486.4 41.8M482 37L483.4 35.4L484.6 37.2" fill="none" stroke="#46469a" stroke-width="0.8" opacity="1" /><path d="M495.4 46.4Q493 43.4 493.2 41.4Q494 40.6 495.4 42.4V37.4Q496.2 36.4 497 37.4V36.2Q497.8 35.2 498.8 36.2V36.8Q499.8 36 500.6 37V38Q501.6 37.4 502.2 38.6V43Q502 45.4 500.8 46.6Z" fill="#fff" stroke="#444" stroke-width="0.7" opacity="1" /><path d="M507 40.4L510.6 38V39.6H514.6V38L518.2 40.4L514.6 42.8V41.2H510.6V42.8Z" fill="#7878d0" stroke="#4a4aac" stroke-width="0.4" opacity="1" /><path d="M527.3 35L530 38.8H528.4V42.4H530L527.3 46.2L524.6 42.4H526.2V38.8H524.6Z" fill="#7878d0" stroke="#4a4aac" stroke-width="0.4" opacity="1" /><path d="M541.4 35.6Q536.4 41 541.4 46.4L541.6 44.2Q539.6 41 541.6 37.8Z" fill="#5858b8" stroke="#3a3a98" stroke-width="0.4" opacity="1" /><path d="M543.4 35.6Q548.4 41 543.4 46.4L543.2 44.2Q545.2 41 543.2 37.8Z" fill="#5858b8" stroke="#3a3a98" stroke-width="0.4" opacity="1" /><rect x="553.4" y="35.7" width="1.2" height="1.2" fill="#6e6e6e" stroke="none" stroke-width="0.6" rx="0" opacity="1"/><rect x="553.4" y="38.8" width="1.2" height="1.2" fill="#6e6e6e" stroke="none" stroke-width="0.6" rx="0" opacity="1"/><rect x="553.4" y="42.1" width="1.2" height="1.2" fill="#6e6e6e" stroke="none" stroke-width="0.6" rx="0" opacity="1"/><rect x="553.4" y="45.4" width="1.2" height="1.2" fill="#6e6e6e" stroke="none" stroke-width="0.6" rx="0" opacity="1"/><path d="M560 36L564.4 43M565 36L561 43" fill="none" stroke="#d4d4e8" stroke-width="1.0" opacity="1" /><circle cx="560.2" cy="44.2" r="1.4" fill="none" stroke="#d4d4e8" stroke-width="0.9" opacity="1"/><rect x="564.6" y="41.0" width="5.4" height="5.0" fill="#ececf4" stroke="#d8d8e6" stroke-width="0.8" rx="0" opacity="1"/><path d="M573 35.4H577.4L579 37V43.4H573Z" fill="#f0f0f0" stroke="#555" stroke-width="0.6" opacity="1" /><path d="M576 36.6H580.4L582 38.2V44.2H576Z" fill="#fafafa" stroke="#555" stroke-width="0.6" opacity="1" /><rect x="579.0" y="40.2" width="6.2" height="5.8" fill="#fff" stroke="#44447c" stroke-width="1.2" rx="0" opacity="1"/><rect x="580.4" y="42.0" width="1.6" height="2.0" fill="#44447c" stroke="none" stroke-width="0.6" rx="0" opacity="1"/><path d="M587.1 40.3H590.1L588.6 42.1Z" fill="#111" stroke="none" stroke-width="0.7" opacity="1" /><rect x="594.0" y="36.0" width="7.0" height="8.0" fill="#e2e2f0" stroke="#d4d4e6" stroke-width="0.8" rx="0" opacity="1"/><rect x="599.0" y="41.0" width="5.4" height="5.0" fill="#ececf4" stroke="#d8d8e6" stroke-width="0.8" rx="0" opacity="1"/><path d="M607.4 40.8H609.8L608.6 42Z" fill="#c4c4c4" stroke="none" stroke-width="0.7" opacity="1" /><path d="M613 38L619 35.6V43L613 41.6Z" fill="#dcdce8" stroke="none" stroke-width="0.7" opacity="1" /><rect x="618.6" y="41.0" width="5.4" height="5.0" fill="#ececf4" stroke="#d8d8e6" stroke-width="0.8" rx="0" opacity="1"/><path d="M627.2 40.8H629.6L628.4 42Z" fill="#c4c4c4" stroke="none" stroke-width="0.7" opacity="1" /><rect x="635.4" y="35.7" width="1.2" height="1.2" fill="#6e6e6e" stroke="none" stroke-width="0.6" rx="0" opacity="1"/><rect x="635.4" y="38.8" width="1.2" height="1.2" fill="#6e6e6e" stroke="none" stroke-width="0.6" rx="0" opacity="1"/><rect x="635.4" y="42.1" width="1.2" height="1.2" fill="#6e6e6e" stroke="none" stroke-width="0.6" rx="0" opacity="1"/><rect x="635.4" y="45.4" width="1.2" height="1.2" fill="#6e6e6e" stroke="none" stroke-width="0.6" rx="0" opacity="1"/><rect x="644.4" y="35.6" width="7.6" height="5.2" fill="#6c6cb4" stroke="#3c3c84" stroke-width="0.5" rx="1.2" opacity="1"/><circle cx="649.0" cy="38.2" r="1.5" fill="#d8d8f4" stroke="#3c3c84" stroke-width="0.4" opacity="1"/><rect x="645.4" y="34.9" width="3.0" height="1.0" fill="#5858a0" stroke="none" stroke-width="0.6" rx="0" opacity="1"/><rect x="641.0" y="40.0" width="5.0" height="6.0" fill="#38389c" stroke="#20206c" stroke-width="0.4" rx="0" opacity="1"/><rect x="642.2" y="40.4" width="2.6" height="2.0" fill="#e0e0f4" stroke="none" stroke-width="0.6" rx="0" opacity="1"/><rect x="642.0" y="43.6" width="3.0" height="2.4" fill="#d0d0ec" stroke="none" stroke-width="0.6" rx="0" opacity="1"/><rect x="658.6" y="35.6" width="7.6" height="5.2" fill="#6c6cb4" stroke="#3c3c84" stroke-width="0.5" rx="1.2" opacity="1"/><circle cx="663.2" cy="38.2" r="1.5" fill="#d8d8f4" stroke="#3c3c84" stroke-width="0.4" opacity="1"/><rect x="659.6" y="34.9" width="3.0" height="1.0" fill="#5858a0" stroke="none" stroke-width="0.6" rx="0" opacity="1"/><rect x="655.4" y="41.0" width="8.2" height="5.2" fill="#c8d0e4" stroke="#444" stroke-width="0.7" rx="0" opacity="1"/><rect x="673.4" y="35.6" width="7.6" height="5.2" fill="#6c6cb4" stroke="#3c3c84" stroke-width="0.5" rx="1.2" opacity="1"/><circle cx="678.0" cy="38.2" r="1.5" fill="#d8d8f4" stroke="#3c3c84" stroke-width="0.4" opacity="1"/><rect x="674.4" y="34.9" width="3.0" height="1.0" fill="#5858a0" stroke="none" stroke-width="0.6" rx="0" opacity="1"/><rect x="670.4" y="43.0" width="7.4" height="3.0" fill="#e8e8e8" stroke="#444" stroke-width="0.7" rx="0" opacity="1"/><rect x="687.6" y="35.6" width="7.6" height="5.2" fill="#6c6cb4" stroke="#3c3c84" stroke-width="0.5" rx="1.2" opacity="1"/><circle cx="692.2" cy="38.2" r="1.5" fill="#d8d8f4" stroke="#3c3c84" stroke-width="0.4" opacity="1"/><rect x="688.6" y="34.9" width="3.0" height="1.0" fill="#5858a0" stroke="none" stroke-width="0.6" rx="0" opacity="1"/><rect x="685.0" y="41.0" width="7.4" height="5.2" fill="#fff" stroke="#555" stroke-width="0.7" rx="0" opacity="1"/><rect x="702.4" y="35.6" width="7.6" height="5.2" fill="#6c6cb4" stroke="#3c3c84" stroke-width="0.5" rx="1.2" opacity="1"/><circle cx="707.0" cy="38.2" r="1.5" fill="#d8d8f4" stroke="#3c3c84" stroke-width="0.4" opacity="1"/><rect x="703.4" y="34.9" width="3.0" height="1.0" fill="#5858a0" stroke="none" stroke-width="0.6" rx="0" opacity="1"/><rect x="699.4" y="40.6" width="7.8" height="5.6" fill="#b8c0d8" stroke="#333" stroke-width="0.9" rx="0" opacity="1"/><rect x="701.4" y="42.2" width="3.8" height="2.4" fill="#3a78d8" stroke="none" stroke-width="0.6" rx="0" opacity="1"/><rect x="715.0" y="35.6" width="7.6" height="5.2" fill="#6c6cb4" stroke="#3c3c84" stroke-width="0.5" rx="1.2" opacity="1"/><path d="M722.6 38.2L725 36.4V40.4Z" fill="#6c6cb4" stroke="#3c3c84" stroke-width="0.4" opacity="1" /><circle cx="719.6" cy="38.2" r="1.5" fill="#d8d8f4" stroke="#3c3c84" stroke-width="0.4" opacity="1"/><rect x="716.0" y="34.9" width="3.0" height="1.0" fill="#5858a0" stroke="none" stroke-width="0.6" rx="0" opacity="1"/><rect x="713.8" y="41.0" width="8.0" height="5.2" fill="#d4dcec" stroke="#444" stroke-width="0.7" rx="0" opacity="1"/><rect x="729.6" y="35.6" width="7.6" height="5.2" fill="#6c6cb4" stroke="#3c3c84" stroke-width="0.5" rx="1.2" opacity="1"/><path d="M737.2 38.2L739.6 36.4V40.4Z" fill="#6c6cb4" stroke="#3c3c84" stroke-width="0.4" opacity="1" /><circle cx="734.2" cy="38.2" r="1.5" fill="#d8d8f4" stroke="#3c3c84" stroke-width="0.4" opacity="1"/><rect x="730.6" y="34.9" width="3.0" height="1.0" fill="#5858a0" stroke="none" stroke-width="0.6" rx="0" opacity="1"/><rect x="728.4" y="41.0" width="7.6" height="5.2" fill="#fff" stroke="#555" stroke-width="0.7" rx="0" opacity="1"/><rect x="745.4" y="35.7" width="1.2" height="1.2" fill="#6e6e6e" stroke="none" stroke-width="0.6" rx="0" opacity="1"/><rect x="745.4" y="38.8" width="1.2" height="1.2" fill="#6e6e6e" stroke="none" stroke-width="0.6" rx="0" opacity="1"/><rect x="745.4" y="42.1" width="1.2" height="1.2" fill="#6e6e6e" stroke="none" stroke-width="0.6" rx="0" opacity="1"/><rect x="745.4" y="45.4" width="1.2" height="1.2" fill="#6e6e6e" stroke="none" stroke-width="0.6" rx="0" opacity="1"/><path d="M752 42.6Q752.6 37.6 757.6 37.8Q761 38 761.8 41.4L759 39.8Q755.6 39.4 754.6 43.6Z" fill="#d2d2ea" stroke="none" stroke-width="0.7" opacity="1" /><path d="M765 40.8H767.2" fill="none" stroke="#b4b4b4" stroke-width="0.8" opacity="1" /><path d="M782 42.6Q781.4 37.6 776.4 37.8Q773 38 772.2 41.4L775 39.8Q778.4 39.4 779.4 43.6Z" fill="#d2d2ea" stroke="none" stroke-width="0.7" opacity="1" /><path d="M785 40.8H787.2" fill="none" stroke="#b4b4b4" stroke-width="0.8" opacity="1" /><path d="M797 39.7L802 35.4V37.8H808.4V41.6H802V44Z" fill="#c2e2ec" stroke="none" stroke-width="0.7" opacity="1" /><path d="M823 39.7L818 35.4V37.8H811.4V41.6H818V44Z" fill="#c2e2ec" stroke="none" stroke-width="0.7" opacity="1" /><rect x="824.6" y="34.4" width="20.8" height="11.0" fill="#fff" stroke="#c4ccd6" stroke-width="0.8" rx="1" opacity="1"/><text x="843.6" y="42.80" transform="rotate(0.03 843.6 42.8)" font-size="7.4" fill="#222" font-weight="normal" text-anchor="end" opacity="1">1</text><text x="846.8" y="42.80" transform="rotate(0.03 846.8 42.8)" font-size="7.2" fill="#333" font-weight="normal" text-anchor="start" opacity="1">of 1</text><path d="M4.6 68.2H8.6L10.6 70.2V75H4.6Z" fill="#c8c8c8" stroke="#333" stroke-width="0.7" opacity="1" /><path d="M3 66.8L5.4 69.2M5.6 66.6L4.6 68.6M2.8 69.2L4.8 68.8" fill="none" stroke="#d8d020" stroke-width="0.9" opacity="1" /><path d="M17.2 74.8V69H20L20.8 70H23.6V71.2" fill="#8a8a14" stroke="#222" stroke-width="0.6" opacity="1" /><path d="M17.2 74.8L19.2 71.2H25.6L23.6 74.8Z" fill="#d0d030" stroke="#222" stroke-width="0.6" opacity="1" /><path d="M22 68.2Q23.6 67 25 68.4" fill="none" stroke="#222" stroke-width="0.6" opacity="1" /><rect x="32.8" y="67.8" width="7.4" height="6.8" fill="#6a6a18" stroke="#1c1c08" stroke-width="0.7" rx="0" opacity="1"/><rect x="34.4" y="68.2" width="4.0" height="2.6" fill="#e0e040" stroke="none" stroke-width="0.6" rx="0" opacity="1"/><rect x="34.8" y="72.2" width="3.2" height="2.4" fill="#1c1c08" stroke="none" stroke-width="0.6" rx="0" opacity="1"/><rect x="48.8" y="70.6" width="7.0" height="4.4" fill="#8a8a14" stroke="#222" stroke-width="0.6" rx="0" opacity="1"/><path d="M51 70.6V68.8Q52.6 67 54.6 68.6" fill="none" stroke="#222" stroke-width="0.7" opacity="1" /><rect x="63.4" y="67.8" width="4.6" height="4.4" fill="#e0e0e0" stroke="#333" stroke-width="0.7" rx="0" opacity="1"/><rect x="65.2" y="69.8" width="5.0" height="4.2" fill="#f4f4f4" stroke="#333" stroke-width="0.7" rx="0" opacity="1"/><path d="M87.4 67.4V72.2" fill="none" stroke="#b01414" stroke-width="1.8" opacity="1" /><circle cx="87.4" cy="74.4" r="0.95" fill="#b01414" stroke="none" stroke-width="0.6" opacity="1"/><rect x="98.4" y="67.2" width="5.6" height="8.0" fill="#eee" stroke="#8a8a8a" stroke-width="0.6" rx="0" opacity="1"/><path d="M99.6 69.6H102.6M100.4 71.4H102.8M100.4 73.2H102.8" fill="none" stroke="#555" stroke-width="0.5" opacity="1" /><path d="M105.6 68.4V74.4" fill="none" stroke="#2038d0" stroke-width="0.9" opacity="1" /><path d="M104.4 73.2L105.6 75L106.8 73.2Z" fill="#2038d0" stroke="none" stroke-width="0.7" opacity="1" /><circle cx="117.6" cy="71.0" r="4.3" fill="#e23232" stroke="#f08080" stroke-width="0.5" opacity="1"/><text x="117.6" y="72.30" transform="rotate(0.03 117.6 72.3)" font-size="3.2" fill="#fff" font-weight="bold" text-anchor="middle" opacity="1">stop</text><rect x="133.6" y="67.8" width="8.4" height="6.8" fill="#555" stroke="#444" stroke-width="0.5" rx="0" opacity="1"/><rect x="134.6" y="70.2" width="2.8" height="3.6" fill="#d8d8d8" stroke="none" stroke-width="0.6" rx="0" opacity="1"/><rect x="138.2" y="70.2" width="2.8" height="3.6" fill="#d8d8d8" stroke="none" stroke-width="0.6" rx="0" opacity="1"/><rect x="134.6" y="68.6" width="6.4" height="0.9" fill="#c8c8c8" stroke="none" stroke-width="0.6" rx="0" opacity="1"/><text x="153.9" y="74.50" transform="rotate(0.03 153.9 74.5)" font-size="9.2" fill="#000" font-weight="bold" text-anchor="middle" font-family="'Liberation Serif',serif" opacity="1">A</text><rect x="165.6" y="67.2" width="5.8" height="8.0" fill="#eee" stroke="#8a8a8a" stroke-width="0.6" rx="0" opacity="1"/><path d="M167 69.6H170M167.8 71.4H170.2M167.8 73.2H170.2" fill="none" stroke="#555" stroke-width="0.5" opacity="1" /><rect x="197.1" y="64.6" width="1.2" height="1.2" fill="#6e6e6e" stroke="none" stroke-width="0.6" rx="0" opacity="1"/><rect x="200.4" y="64.6" width="1.2" height="1.2" fill="#6e6e6e" stroke="none" stroke-width="0.6" rx="0" opacity="1"/><rect x="203.7" y="64.6" width="1.2" height="1.2" fill="#6e6e6e" stroke="none" stroke-width="0.6" rx="0" opacity="1"/><rect x="206.9" y="64.6" width="1.2" height="1.2" fill="#6e6e6e" stroke="none" stroke-width="0.6" rx="0" opacity="1"/><path d="M199.5 72.2L207.0 70V77.5L199.5 79.7Z" fill="#3c3c8a" stroke="#2a2a60" stroke-width="0.4" opacity="1" /><path d="M202.0 71.5V79.0" fill="none" stroke="#9a9ad0" stroke-width="0.45" opacity="1" /><path d="M199.5 74.7L207.0 72.5" fill="none" stroke="#9a9ad0" stroke-width="0.45" opacity="1" /><path d="M204.5 70.7V78.2" fill="none" stroke="#9a9ad0" stroke-width="0.45" opacity="1" /><path d="M199.5 77.2L207.0 75.0" fill="none" stroke="#9a9ad0" stroke-width="0.45" opacity="1" /><rect x="197.2" y="74.2" width="6.6" height="7.0" fill="#f4ecec" stroke="#e85038" stroke-width="1.0" rx="0" opacity="1"/><path d="M199 76H202M200.5 75V80" fill="none" stroke="#c8c8d8" stroke-width="0.5" opacity="1" /><path d="M198.4 87.80000000000001L206.8 85.4V92.0L198.4 94.4Z" fill="#3c3c8a" stroke="#2a2a60" stroke-width="0.4" opacity="1" /><path d="M201.2 87.0V93.6" fill="none" stroke="#9a9ad0" stroke-width="0.45" opacity="1" /><path d="M198.4 90.0L206.8 87.6" fill="none" stroke="#9a9ad0" stroke-width="0.45" opacity="1" /><path d="M204.0 86.2V92.8" fill="none" stroke="#9a9ad0" stroke-width="0.45" opacity="1" /><path d="M198.4 92.2L206.8 89.8" fill="none" stroke="#9a9ad0" stroke-width="0.45" opacity="1" /><path d="M203 93.6Q205.4 95 207.8 91.6L206.4 91.2L207.2 93.8" fill="#e01818" stroke="#e01818" stroke-width="0.6" opacity="1" /><path d="M198.4 102.0L206.8 99.6V106.0L198.4 108.4Z" fill="#3c3c8a" stroke="#2a2a60" stroke-width="0.4" opacity="1" /><path d="M201.2 101.2V107.6" fill="none" stroke="#9a9ad0" stroke-width="0.45" opacity="1" /><path d="M198.4 104.1L206.8 101.7" fill="none" stroke="#9a9ad0" stroke-width="0.45" opacity="1" /><path d="M204.0 100.4V106.8" fill="none" stroke="#9a9ad0" stroke-width="0.45" opacity="1" /><path d="M198.4 106.3L206.8 103.9" fill="none" stroke="#9a9ad0" stroke-width="0.45" opacity="1" /><path d="M203.4 104.4L207 103V107L203.4 108Z" fill="#f4f4f4" stroke="#bbb" stroke-width="0.3" opacity="1" /><path d="M198 117.0L206.8 114.4V121.4L198 124.0Z" fill="#3c3c8a" stroke="#2a2a60" stroke-width="0.4" opacity="1" /><path d="M200.9 116.1V123.1" fill="none" stroke="#9a9ad0" stroke-width="0.45" opacity="1" /><path d="M198 119.3L206.8 116.7" fill="none" stroke="#9a9ad0" stroke-width="0.45" opacity="1" /><path d="M203.9 115.3V122.3" fill="none" stroke="#9a9ad0" stroke-width="0.45" opacity="1" /><path d="M198 121.7L206.8 119.1" fill="none" stroke="#9a9ad0" stroke-width="0.45" opacity="1" /><path d="M200 130L207 127.6V136L200 138Z" fill="#e8e8ec" stroke="#b0b0b8" stroke-width="0.4" opacity="1" /><path d="M198.4 134.2L203.8 133V137.8L198.4 139.0Z" fill="#3c3c8a" stroke="#2a2a60" stroke-width="0.4" opacity="1" /><path d="M200.2 133.8V138.6" fill="none" stroke="#9a9ad0" stroke-width="0.45" opacity="1" /><path d="M198.4 135.8L203.8 134.6" fill="none" stroke="#9a9ad0" stroke-width="0.45" opacity="1" /><path d="M202.0 133.4V138.2" fill="none" stroke="#9a9ad0" stroke-width="0.45" opacity="1" /><path d="M198.4 137.4L203.8 136.2" fill="none" stroke="#9a9ad0" stroke-width="0.45" opacity="1" /><rect x="196.9" y="132.0" width="7.6" height="7.8" fill="none" stroke="#e85038" stroke-width="1.0" rx="0" opacity="1"/><path d="M199.8 146.2L205.4 144.6V150.6L199.8 152.2Z" fill="#3c3c8a" stroke="#2a2a60" stroke-width="0.4" opacity="1" /><path d="M201.7 145.7V151.7" fill="none" stroke="#9a9ad0" stroke-width="0.45" opacity="1" /><path d="M199.8 148.2L205.4 146.6" fill="none" stroke="#9a9ad0" stroke-width="0.45" opacity="1" /><path d="M203.5 145.1V151.1" fill="none" stroke="#9a9ad0" stroke-width="0.45" opacity="1" /><path d="M199.8 150.2L205.4 148.6" fill="none" stroke="#9a9ad0" stroke-width="0.45" opacity="1" /><circle cx="202.5" cy="148.5" r="5.2" fill="none" stroke="#e85038" stroke-width="1.0" opacity="1"/><path d="M197 163.6L200.2 159.4L203 160.6L201.6 165L199 167.6Z" fill="#141448" stroke="#0a0a30" stroke-width="0.4" opacity="1" /><path d="M202.4 161.2L205.2 159L208 162L206.4 166.6L204 165Z" fill="#141448" stroke="#0a0a30" stroke-width="0.4" opacity="1" /><circle cx="199.6" cy="166.0" r="1.1" fill="#3a6af0" stroke="none" stroke-width="0.6" opacity="1"/><circle cx="206.0" cy="164.4" r="1.1" fill="#3a6af0" stroke="none" stroke-width="0.6" opacity="1"/><circle cx="199.5" cy="175.7" r="2.6" fill="#2222c4" stroke="none" stroke-width="0.6" opacity="1"/><text x="199.5" y="177.30" transform="rotate(0.03 199.5 177.3)" font-size="4.4" fill="#fff" font-weight="bold" text-anchor="middle" opacity="1">i</text><text x="202.2" y="184.00" transform="rotate(0.03 202.2 184.0)" font-size="5" fill="#222" font-weight="bold" text-anchor="middle" opacity="1">123</text><path d="M197.6 197.2L206.6 191.6" fill="none" stroke="#30308a" stroke-width="1.0" opacity="1" /><circle cx="197.6" cy="192.6" r="0.9" fill="none" stroke="#333" stroke-width="0.5" opacity="1"/><path d="M197.6 193.6V197.2M206.6 189.4V192" fill="none" stroke="#30308a" stroke-width="0.8" opacity="1" /><text x="206.6" y="189.60" transform="rotate(0.03 206.6 189.6)" font-size="3.4" fill="#222" font-weight="normal" text-anchor="middle" opacity="1">1</text><text x="204.6" y="198.60" transform="rotate(0.03 204.6 198.6)" font-size="3.2" fill="#222" font-weight="normal" text-anchor="middle" opacity="1">90°</text><defs><linearGradient id="og" x1="0" y1="0" x2="0" y2="1"><stop offset="0" stop-color="#fbe3c2"/><stop offset="0.55" stop-color="#f6c27e"/><stop offset="1" stop-color="#f0a448"/></linearGradient></defs><rect x="195.3" y="200.4" width="13.2" height="13.2" fill="url(#og)" stroke="#9a9a9a" stroke-width="0.7" rx="0" opacity="1"/><path d="M196.8 203.0L201.60000000000002 202.2V206.6L196.8 207.4Z" fill="#3c3c8a" stroke="#2a2a60" stroke-width="0.4" opacity="1" /><path d="M198.4 202.7V207.1" fill="none" stroke="#9a9ad0" stroke-width="0.45" opacity="1" /><path d="M196.8 204.5L201.60000000000002 203.7" fill="none" stroke="#9a9ad0" stroke-width="0.45" opacity="1" /><path d="M200.0 202.5V206.9" fill="none" stroke="#9a9ad0" stroke-width="0.45" opacity="1" /><path d="M196.8 205.9L201.60000000000002 205.1" fill="none" stroke="#9a9ad0" stroke-width="0.45" opacity="1" /><text x="202.4" y="212.80" transform="rotate(0.03 202.4 212.8)" font-size="4.4" fill="#2a2010" font-weight="bold" text-anchor="middle" opacity="1">ABC</text><rect x="195.3" y="214.8" width="13.2" height="13.6" fill="url(#og)" stroke="#9a9a9a" stroke-width="0.7" rx="0" opacity="1"/><path d="M197.3 216.2V222.4" fill="none" stroke="#d01818" stroke-width="1.0" opacity="1" /><path d="M196.2 218L197.3 216L198.4 218Z" fill="#d01818" stroke="none" stroke-width="0.7" opacity="1" /><circle cx="197.3" cy="223.0" r="0.8" fill="#111" stroke="none" stroke-width="0.6" opacity="1"/><text x="202.4" y="227.60" transform="rotate(0.03 202.4 227.6)" font-size="4.4" fill="#2a2010" font-weight="bold" text-anchor="middle" opacity="1">ABC</text><path d="M196.4 235.4L201.0 234.6V237.6L196.4 238.4Z" fill="#3c3c8a" stroke="#2a2a60" stroke-width="0.4" opacity="1" /><path d="M197.9 235.1V238.1" fill="none" stroke="#9a9ad0" stroke-width="0.45" opacity="1" /><path d="M196.4 236.4L201.0 235.6" fill="none" stroke="#9a9ad0" stroke-width="0.45" opacity="1" /><path d="M199.5 234.9V237.9" fill="none" stroke="#9a9ad0" stroke-width="0.45" opacity="1" /><path d="M196.4 237.4L201.0 236.6" fill="none" stroke="#9a9ad0" stroke-width="0.45" opacity="1" /><path d="M201.6 238.8L206.6 238V241L201.6 241.8Z" fill="#3c3c8a" stroke="#2a2a60" stroke-width="0.4" opacity="1" /><path d="M203.3 238.5V241.5" fill="none" stroke="#9a9ad0" stroke-width="0.45" opacity="1" /><path d="M201.6 239.8L206.6 239.0" fill="none" stroke="#9a9ad0" stroke-width="0.45" opacity="1" /><path d="M204.9 238.3V241.3" fill="none" stroke="#9a9ad0" stroke-width="0.45" opacity="1" /><path d="M201.6 240.8L206.6 240.0" fill="none" stroke="#9a9ad0" stroke-width="0.45" opacity="1" /><path d="M197.8 231.2L199 233.8H196.6Z" fill="#e01818" stroke="none" stroke-width="0.7" opacity="1" /><circle cx="206.2" cy="242.0" r="0.9" fill="#e01818" stroke="none" stroke-width="0.6" opacity="1"/><path d="M204 232.6L206.4 233.6" fill="none" stroke="#444" stroke-width="0.5" opacity="1" /><path d="M197.8 249L206.6 247V254.6L197.8 256.4Z" fill="#4a8ce4" stroke="#1a3a8a" stroke-width="0.6" opacity="1" /><circle cx="197.8" cy="249.0" r="0.7" fill="#111" stroke="none" stroke-width="0.6" opacity="1"/><circle cx="206.6" cy="247.0" r="0.7" fill="#111" stroke="none" stroke-width="0.6" opacity="1"/><circle cx="206.6" cy="254.6" r="0.7" fill="#111" stroke="none" stroke-width="0.6" opacity="1"/><circle cx="197.8" cy="256.4" r="0.7" fill="#111" stroke="none" stroke-width="0.6" opacity="1"/><rect x="196.7" y="381.1" width="1.2" height="1.2" fill="#6e6e6e" stroke="none" stroke-width="0.6" rx="0" opacity="1"/><rect x="196.7" y="384.4" width="1.2" height="1.2" fill="#6e6e6e" stroke="none" stroke-width="0.6" rx="0" opacity="1"/><rect x="196.7" y="387.6" width="1.2" height="1.2" fill="#6e6e6e" stroke="none" stroke-width="0.6" rx="0" opacity="1"/><rect x="196.7" y="390.8" width="1.2" height="1.2" fill="#6e6e6e" stroke="none" stroke-width="0.6" rx="0" opacity="1"/><path d="M203 383.40000000000003L213.2 380.8V389.0L203 391.6Z" fill="#74749c" stroke="#2a2a60" stroke-width="0.4" opacity="1" /><path d="M206.4 382.5V390.7" fill="none" stroke="#a8a8c4" stroke-width="0.45" opacity="1" /><path d="M203 386.1L213.2 383.5" fill="none" stroke="#a8a8c4" stroke-width="0.45" opacity="1" /><path d="M209.8 381.7V389.9" fill="none" stroke="#a8a8c4" stroke-width="0.45" opacity="1" /><path d="M203 388.9L213.2 386.3" fill="none" stroke="#a8a8c4" stroke-width="0.45" opacity="1" /><path d="M216.3 385.9H219.3L217.8 387.7Z" fill="#111" stroke="none" stroke-width="0.7" opacity="1" /><rect x="224.4" y="381.1" width="1.2" height="1.2" fill="#6e6e6e" stroke="none" stroke-width="0.6" rx="0" opacity="1"/><rect x="224.4" y="384.4" width="1.2" height="1.2" fill="#6e6e6e" stroke="none" stroke-width="0.6" rx="0" opacity="1"/><rect x="224.4" y="387.6" width="1.2" height="1.2" fill="#6e6e6e" stroke="none" stroke-width="0.6" rx="0" opacity="1"/><rect x="224.4" y="390.8" width="1.2" height="1.2" fill="#6e6e6e" stroke="none" stroke-width="0.6" rx="0" opacity="1"/><path d="M230 381.6H233.76L234.7 382.8H237.99V389.20000000000005H230Z" fill="#f0b850" stroke="#c89030" stroke-width="0.4" opacity="1" /><path d="M230.3 389.20000000000005L232.5 384.1H239.4L237.99 389.20000000000005Z" fill="#fbd987" stroke="#d8a040" stroke-width="0.4" opacity="1" /><ellipse cx="235.5" cy="387.5" rx="2.4" ry="1.7" fill="#1cc41c" stroke="#0a7a0a" stroke-width="0.4"/><ellipse cx="235.2" cy="387.0" rx="1.0" ry="0.5" fill="#8af08a" stroke="none" stroke-width="0.4"/><ellipse cx="233.2" cy="389.9" rx="2.4" ry="1.7" fill="#1a24dc" stroke="#0a0a80" stroke-width="0.4"/><ellipse cx="232.9" cy="389.4" rx="1.0" ry="0.5" fill="#8a90f8" stroke="none" stroke-width="0.4"/><ellipse cx="237.9" cy="390.0" rx="2.2" ry="1.6" fill="#e08a10" stroke="#8a5008" stroke-width="0.4"/><ellipse cx="237.6" cy="389.5" rx="0.9" ry="0.45" fill="#f8d08a" stroke="none" stroke-width="0.4"/><path d="M244.4 381.6H248.16L249.1 382.8H252.39000000000001V389.20000000000005H244.4Z" fill="#f0b850" stroke="#c89030" stroke-width="0.4" opacity="1" /><path d="M244.70000000000002 389.20000000000005L246.9 384.1H253.8L252.39000000000001 389.20000000000005Z" fill="#fbd987" stroke="#d8a040" stroke-width="0.4" opacity="1" /><ellipse cx="251" cy="389.2" rx="4.7" ry="2.9" fill="#0c14a8"/><ellipse cx="251" cy="388.2" rx="4.6" ry="2.6" fill="#2834e8"/><ellipse cx="251" cy="387.8" rx="2" ry="0.8" fill="#8a94ff"/><path d="M259.2 381.6H262.88L263.8 382.8H267.02V389.20000000000005H259.2Z" fill="#f0b850" stroke="#c89030" stroke-width="0.4" opacity="1" /><path d="M259.5 389.20000000000005L261.7 384.1H268.4L267.02 389.20000000000005Z" fill="#fbd987" stroke="#d8a040" stroke-width="0.4" opacity="1" /><rect x="263.2" y="385.6" width="6.0" height="6.2" fill="#fff" stroke="#999" stroke-width="0.4" rx="0" opacity="1"/><path d="M262.8 388V385.4H269.4V388" fill="none" stroke="#e02020" stroke-width="1.0" opacity="1" /><path d="M264.8 387.4H267.6L266.6 389.4L267.6 391.4H264.8L265.8 389.4Z" fill="#444" stroke="none" stroke-width="0.7" opacity="1" /><path d="M274.2 381.6H277.88L278.8 382.8H282.02V389.20000000000005H274.2Z" fill="#f0b850" stroke="#c89030" stroke-width="0.4" opacity="1" /><path d="M274.5 389.20000000000005L276.7 384.1H283.4L282.02 389.20000000000005Z" fill="#fbd987" stroke="#d8a040" stroke-width="0.4" opacity="1" /><ellipse cx="280.6" cy="389.2" rx="4.7" ry="2.9" fill="#4a4a4a"/><ellipse cx="280.6" cy="388.2" rx="4.6" ry="2.6" fill="#8e8e8e"/><ellipse cx="280.6" cy="387.9" rx="2.2" ry="0.9" fill="#c8c8c8"/><path d="M275.2 383V391" fill="none" stroke="#d01818" stroke-width="0.7" opacity="1" stroke-dasharray="1 1"/><path d="M288.4 381.6H291.84L292.7 382.8H295.71V389.20000000000005H288.4Z" fill="#f0b850" stroke="#c89030" stroke-width="0.4" opacity="1" /><path d="M288.7 389.20000000000005L290.9 384.1H297.0L295.71 389.20000000000005Z" fill="#fbd987" stroke="#d8a040" stroke-width="0.4" opacity="1" /><path d="M293.4 381.6V389.6" fill="none" stroke="#d81818" stroke-width="1.1" opacity="1" /><path d="M291.8 388L293.4 390.6L295 388Z" fill="#d81818" stroke="none" stroke-width="0.7" opacity="1" /><circle cx="293.0" cy="391.0" r="0.8" fill="#111" stroke="none" stroke-width="0.6" opacity="1"/><rect x="296.2" y="388.0" width="3.8" height="3.8" fill="#28a828" stroke="none" stroke-width="0.6" rx="0" opacity="1"/><path d="M303 381.6H306.44L307.3 382.8H310.31V389.20000000000005H303Z" fill="#f0b850" stroke="#c89030" stroke-width="0.4" opacity="1" /><path d="M303.3 389.20000000000005L305.5 384.1H311.6L310.31 389.20000000000005Z" fill="#fbd987" stroke="#d8a040" stroke-width="0.4" opacity="1" /><path d="M308 383V388.4L304.6 391M308 388.4L311 390.4" fill="none" stroke="#5a5ad0" stroke-width="0.9" opacity="1" /><rect x="310.4" y="388.0" width="4.0" height="3.8" fill="#28a828" stroke="none" stroke-width="0.6" rx="0" opacity="1"/><path d="M316.7 385.9H319.7L318.2 387.7Z" fill="#111" stroke="none" stroke-width="0.7" opacity="1" /><rect x="324.2" y="381.0" width="0.9" height="11.2" fill="#bcbcbc" stroke="none" stroke-width="0.6" rx="0" opacity="1"/><path d="M331.8 382.8L340.2 390.6M340.2 382.8L331.8 390.6" fill="none" stroke="#e22222" stroke-width="3.0" opacity="1" /><g><rect x="345" y="384.6" width="6.4" height="6" rx="2.4" fill="#6c6c6c"/><ellipse cx="348.2" cy="384.9" rx="3.2" ry="2.2" fill="#9c9c9c" stroke="#5a5a5a" stroke-width="0.4"/><rect x="350.4" y="385.6" width="6.4" height="6" rx="2.4" fill="#747474"/><ellipse cx="353.6" cy="385.9" rx="3.2" ry="2.2" fill="#a6a6a6" stroke="#5a5a5a" stroke-width="0.4"/></g><path d="M359.4 382H364.03999999999996L365.2 383.2H369.26V391.4H359.4Z" fill="#f0b850" stroke="#c89030" stroke-width="0.4" opacity="1" /><path d="M359.7 391.4L361.9 384.5H371.0L369.26 391.4Z" fill="#fbd987" stroke="#d8a040" stroke-width="0.4" opacity="1" /><path d="M362.6 386Q365 390.4 369 388.6L368.6 386.8L366.8 390.2" fill="#e01818" stroke="#e01818" stroke-width="0.6" opacity="1" /><text x="380.4" y="384.40" transform="rotate(0.03 380.4 384.4)" font-size="3.8" fill="#222" font-weight="normal" text-anchor="middle" opacity="1">1</text><text x="381.4" y="388.40" transform="rotate(0.03 381.4 388.4)" font-size="3.8" fill="#222" font-weight="normal" text-anchor="middle" opacity="1">2</text><text x="380.4" y="392.40" transform="rotate(0.03 380.4 392.4)" font-size="3.8" fill="#222" font-weight="normal" text-anchor="middle" opacity="1">3</text><path d="M376.4 384.4L378.6 383M383 386.8L384.6 385" fill="none" stroke="#e01818" stroke-width="0.9" opacity="1" /><rect x="390.8" y="381.1" width="1.2" height="1.2" fill="#6e6e6e" stroke="none" stroke-width="0.6" rx="0" opacity="1"/><rect x="390.8" y="384.4" width="1.2" height="1.2" fill="#6e6e6e" stroke="none" stroke-width="0.6" rx="0" opacity="1"/><rect x="390.8" y="387.6" width="1.2" height="1.2" fill="#6e6e6e" stroke="none" stroke-width="0.6" rx="0" opacity="1"/><rect x="390.8" y="390.8" width="1.2" height="1.2" fill="#6e6e6e" stroke="none" stroke-width="0.6" rx="0" opacity="1"/><rect x="394.0" y="380.5" width="50.0" height="12.0" fill="#fff" stroke="none" stroke-width="0.6" rx="0" opacity="1"/><rect x="444.0" y="380.5" width="7.4" height="12.0" fill="#eee" stroke="none" stroke-width="0.6" rx="0" opacity="1"/><path d="M395.4 386.6Q397 382.2 400.6 382.4Q403 382.8 403.8 385.6L402 388.4Q400.6 385.6 398 386.6Z" fill="#6a6ab0" stroke="#38387a" stroke-width="0.5" opacity="1" /><rect x="395.2" y="390.4" width="1.7" height="1.1" fill="#e02020" stroke="none" stroke-width="0.6" rx="0" opacity="1"/><rect x="396.9" y="390.4" width="1.7" height="1.1" fill="#e0a020" stroke="none" stroke-width="0.6" rx="0" opacity="1"/><rect x="398.6" y="390.4" width="1.7" height="1.1" fill="#20b020" stroke="none" stroke-width="0.6" rx="0" opacity="1"/><rect x="400.3" y="390.4" width="1.7" height="1.1" fill="#2060e0" stroke="none" stroke-width="0.6" rx="0" opacity="1"/><rect x="402.0" y="390.4" width="1.7" height="1.1" fill="#8020c0" stroke="none" stroke-width="0.6" rx="0" opacity="1"/><path d="M446.1 385.4H449.1L447.6 387.2Z" fill="#111" stroke="none" stroke-width="0.7" opacity="1" /><path d="M454 386.6Q456 382 460 382.2Q464 382.6 465.6 386L463 390.4Q460.6 386.4 457.6 389.4Z" fill="#fff" stroke="#333" stroke-width="0.6" opacity="1" /><path d="M467.7 385.9H470.7L469.2 387.7Z" fill="#111" stroke="none" stroke-width="0.7" opacity="1" /><path d="M473.6 385.6Q475.6 381.6 479.6 382Q483.6 382.4 485 386L482.4 389.6Q480.4 385.8 477.2 388.4Z" fill="#6a6ab0" stroke="#38387a" stroke-width="0.5" opacity="1" /><path d="M487.9 385.9H490.9L489.4 387.7Z" fill="#111" stroke="none" stroke-width="0.7" opacity="1" /><path d="M493.4 384.4L499 381.4L504.6 384.4V389.6L499 392.4L493.4 389.6Z" fill="#7878b8" stroke="#38387a" stroke-width="0.5" opacity="1" /><path d="M493.4 384.4L499 387L504.6 384.4M499 387V392.4" fill="none" stroke="#c4c4e8" stroke-width="0.6" opacity="1" /><rect x="499.8" y="387.6" width="3.2" height="2.6" fill="#d8d8f0" stroke="#38387a" stroke-width="0.3" rx="0" opacity="1"/><rect x="509.4" y="381.0" width="0.9" height="11.2" fill="#bcbcbc" stroke="none" stroke-width="0.6" rx="0" opacity="1"/><rect x="513.2" y="380.5" width="52.8" height="12.0" fill="#fff" stroke="none" stroke-width="0.6" rx="0" opacity="1"/><rect x="566.0" y="380.5" width="7.4" height="12.0" fill="#eee" stroke="none" stroke-width="0.6" rx="0" opacity="1"/><path d="M514.4 383.6L518.5 381.2L522.6 383.6V387.6L518.5 389.8L514.4 387.6Z" fill="#3c3c94" stroke="#1c1c5c" stroke-width="0.5" opacity="1" /><path d="M514.4 383.6L518.5 385.8L522.6 383.6M518.5 385.8V389.8" fill="none" stroke="#a0a0dc" stroke-width="0.5" opacity="1" /><rect x="514.4" y="390.4" width="1.7" height="1.1" fill="#e02020" stroke="none" stroke-width="0.6" rx="0" opacity="1"/><rect x="516.1" y="390.4" width="1.7" height="1.1" fill="#e0a020" stroke="none" stroke-width="0.6" rx="0" opacity="1"/><rect x="517.8" y="390.4" width="1.7" height="1.1" fill="#20b020" stroke="none" stroke-width="0.6" rx="0" opacity="1"/><rect x="519.5" y="390.4" width="1.7" height="1.1" fill="#2060e0" stroke="none" stroke-width="0.6" rx="0" opacity="1"/><rect x="521.2" y="390.4" width="1.7" height="1.1" fill="#8020c0" stroke="none" stroke-width="0.6" rx="0" opacity="1"/><path d="M568.3 385.4H571.3L569.8 387.2Z" fill="#111" stroke="none" stroke-width="0.7" opacity="1" /><path d="M576.2 384.2L582 381.2L587.8 384.2V389.4L582 392.2L576.2 389.4Z" fill="#fff" stroke="#444" stroke-width="0.6" opacity="1" /><path d="M576.2 384.2L582 387L587.8 384.2M582 387V392.2M579 382.8L585 385.8M585 382.8L579 385.8M576.2 386.8L582 389.6L587.8 386.8" fill="none" stroke="#666" stroke-width="0.4" opacity="1" /><path d="M590.6 385.9H593.6L592.1 387.7Z" fill="#111" stroke="none" stroke-width="0.7" opacity="1" /><path d="M596.2 384.2L601.8 381.2L607.4 384.2V389.4L601.8 392.2L596.2 389.4Z" fill="#4a4a9c" stroke="#22225c" stroke-width="0.5" opacity="1" /><path d="M596.2 384.2L601.8 387L607.4 384.2M601.8 387V392.2M599 382.8L604.6 385.6M604.6 382.8L599 385.6M596.2 386.8L601.8 389.6L607.4 386.8" fill="none" stroke="#a8a8e0" stroke-width="0.4" opacity="1" /><path d="M610.2 385.9H613.2L611.7 387.7Z" fill="#111" stroke="none" stroke-width="0.7" opacity="1" /><path d="M618.8 388.8L626 384.4" fill="none" stroke="#222" stroke-width="1.0" opacity="1" /><path d="M629.9 385.9H632.9L631.4 387.7Z" fill="#111" stroke="none" stroke-width="0.7" opacity="1" /><path d="M636.2 386.2L641.6 383L647 386.2L641.6 389.4Z" fill="#e4e4e4" stroke="#222" stroke-width="0.7" opacity="1" /><path d="M638.9 384.6L644.3 387.8M644.3 384.6L638.9 387.8" fill="none" stroke="#222" stroke-width="0.5" opacity="1" /><path d="M650.0 385.9H653.0L651.5 387.7Z" fill="#111" stroke="none" stroke-width="0.7" opacity="1" /><path d="M655.8 385.6L661.2 382.2L666.6 385.6L661.2 389Z" fill="#9c9cf0" stroke="#2a2aa0" stroke-width="0.5" opacity="1" /><path d="M655.8 385.6V387.6L661.2 391.2L666.6 387.6V385.6L661.2 389Z" fill="#2424a4" stroke="none" stroke-width="0.7" opacity="1" /><path d="M670.0 385.9H673.0L671.5 387.7Z" fill="#111" stroke="none" stroke-width="0.7" opacity="1" /><path d="M677.6 385.2L680.8000000000001 384.4V386.79999999999995L677.6 387.59999999999997Z" fill="#3a3aa8" stroke="none" stroke-width="0.7" opacity="1" /><path d="M681.8 383.6L685.0 382.8V385.2L681.8 386.0Z" fill="#3a3aa8" stroke="none" stroke-width="0.7" opacity="1" /><path d="M677.4 389.2L680.6 388.4V390.79999999999995L677.4 391.59999999999997Z" fill="#3a3aa8" stroke="none" stroke-width="0.7" opacity="1" /><path d="M681.6 387.6L684.8000000000001 386.8V389.2L681.6 390.0Z" fill="#3a3aa8" stroke="none" stroke-width="0.7" opacity="1" /><rect x="691.4" y="381.8" width="9.6" height="7.0" fill="#4a9ce4" stroke="#2c4c8c" stroke-width="0.7" rx="0" opacity="1"/><path d="M696.2 388.8V390.4M693.6 391.2H698.8" fill="none" stroke="#222" stroke-width="1.1" opacity="1" /><rect x="707.4" y="381.1" width="1.2" height="1.2" fill="#6e6e6e" stroke="none" stroke-width="0.6" rx="0" opacity="1"/><rect x="707.4" y="384.4" width="1.2" height="1.2" fill="#6e6e6e" stroke="none" stroke-width="0.6" rx="0" opacity="1"/><rect x="707.4" y="387.6" width="1.2" height="1.2" fill="#6e6e6e" stroke="none" stroke-width="0.6" rx="0" opacity="1"/><rect x="707.4" y="390.8" width="1.2" height="1.2" fill="#6e6e6e" stroke="none" stroke-width="0.6" rx="0" opacity="1"/><path d="M718.8 381.4L720.3 385H724L721 387.3L722.1 391.2L718.8 388.9L715.5 391.2L716.6 387.3L713.6 385H717.3Z" fill="#f6b400" stroke="#c88a00" stroke-width="0.5" opacity="1" /></svg>
<span class="t" style="left:17px;top:4px;font-size:8.8px;line-height:12.32px;color:#a2a2a2;transform:translateY(0.00px) scaleX(0.8880) rotate(0.03deg);">Untitled - HyperWorks 2020 - OptiStruct</span>
<span class="t" style="left:2.8px;top:19px;font-size:8.8px;line-height:12.32px;color:#707070;transform:translateY(0.90px) scaleX(0.8102) rotate(0.03deg);">File</span>
<span class="t" style="left:22.3px;top:19px;font-size:8.8px;line-height:12.32px;color:#707070;transform:translateY(0.90px) scaleX(0.8762) rotate(0.03deg);">Edit</span>
<span class="t" style="left:43.2px;top:19px;font-size:8.8px;line-height:12.32px;color:#707070;transform:translateY(0.90px) scaleX(0.8770) rotate(0.03deg);">View</span>
<span class="t" style="left:66.7px;top:19px;font-size:8.8px;line-height:12.32px;color:#707070;transform:translateY(0.90px) scaleX(0.8769) rotate(0.03deg);">Collectors</span>
<span class="t" style="left:108.5px;top:19px;font-size:8.8px;line-height:12.32px;color:#707070;transform:translateY(0.90px) scaleX(0.8801) rotate(0.03deg);">Geometry</span>
<span class="t" style="left:150px;top:19px;font-size:8.8px;line-height:12.32px;color:#707070;transform:translateY(0.90px) scaleX(0.8271) rotate(0.03deg);">Mesh</span>
<span class="t" style="left:176px;top:19px;font-size:8.8px;line-height:12.32px;color:#707070;transform:translateY(0.90px) scaleX(0.8443) rotate(0.03deg);">Connectors</span>
<span class="t" style="left:221.5px;top:19px;font-size:8.8px;line-height:12.32px;color:#707070;transform:translateY(0.90px) scaleX(0.8965) rotate(0.03deg);">Materials</span>
<span class="t" style="left:260.5px;top:19px;font-size:8.8px;line-height:12.32px;color:#707070;transform:translateY(0.90px) scaleX(0.9476) rotate(0.03deg);">Properties</span>
<span class="t" style="left:303.5px;top:19px;font-size:8.8px;line-height:12.32px;color:#707070;transform:translateY(0.90px) scaleX(0.7516) rotate(0.03deg);">BCs</span>
<span class="t" style="left:322.5px;top:19px;font-size:8.8px;line-height:12.32px;color:#707070;transform:translateY(0.90px) scaleX(0.8693) rotate(0.03deg);">Setup</span>
<span class="t" style="left:349.5px;top:19px;font-size:8.8px;line-height:12.32px;color:#707070;transform:translateY(0.90px) scaleX(0.9001) rotate(0.03deg);">Tools</span>
<span class="t" style="left:375px;top:19px;font-size:8.8px;line-height:12.32px;color:#707070;transform:translateY(0.90px) scaleX(0.9538) rotate(0.03deg);">Morphing</span>
<span class="t" style="left:416px;top:19px;font-size:8.8px;line-height:12.32px;color:#707070;transform:translateY(0.90px) scaleX(0.9510) rotate(0.03deg);">Optimization</span>
<span class="t" style="left:469px;top:19px;font-size:8.8px;line-height:12.32px;color:#707070;transform:translateY(0.90px) scaleX(0.8515) rotate(0.03deg);">Post</span>
<span class="t" style="left:491px;top:19px;font-size:8.8px;line-height:12.32px;color:#707070;transform:translateY(0.90px) scaleX(0.8466) rotate(0.03deg);">XYPlots</span>
<span class="t" style="left:524px;top:19px;font-size:8.8px;line-height:12.32px;color:#707070;transform:translateY(0.90px) scaleX(0.8326) rotate(0.03deg);">Preferences</span>
<span class="t" style="left:571px;top:19px;font-size:8.8px;line-height:12.32px;color:#707070;transform:translateY(0.90px) scaleX(0.9063) rotate(0.03deg);">Applications</span>
<span class="t" style="left:621.5px;top:19px;font-size:8.8px;line-height:12.32px;color:#707070;transform:translateY(0.90px) scaleX(0.9116) rotate(0.03deg);">Help</span>
<span class="t" style="left:1px;top:52px;font-size:7.6px;line-height:10.64px;color:#333;transform:translateY(0.23px) scaleX(0.9247) rotate(0.03deg);">Session</span>
<span class="t" style="left:36px;top:52px;font-size:7.6px;line-height:10.64px;color:#333;transform:translateY(0.23px) scaleX(0.9085) rotate(0.03deg);">Mask</span>
<span class="t" style="left:62.5px;top:52px;font-size:7.6px;line-height:10.64px;color:#333;transform:translateY(0.23px) scaleX(0.9423) rotate(0.03deg);">Model</span>
<span class="t" style="left:92px;top:52px;font-size:7.6px;line-height:10.64px;color:#333;transform:translateY(0.23px) scaleX(0.9324) rotate(0.03deg);">Process Manager</span>
<span class="t" style="left:149px;top:51px;font-size:6.5px;line-height:9.1px;color:#444;transform:translateY(0.91px) scaleX(0.8327) rotate(0.03deg);">✕</span>
<span class="t" style="left:157px;top:52px;font-size:7.6px;line-height:10.64px;color:#333;transform:translateY(0.23px) scaleX(0.9017) rotate(0.03deg);">Export</span>
<span class="t" style="left:1px;top:88px;font-size:7.2px;line-height:10.08px;color:#333;transform:translateY(0.42px) scaleX(0.9460) rotate(0.03deg);">Load template:</span>
<span class="t" style="left:63px;top:88px;font-size:7.2px;line-height:10.08px;color:#333;transform:translateY(0.22px) scaleX(0.8898) rotate(0.03deg);">Fatigue_PM</span>
<span class="t" style="left:4px;top:103px;font-size:8.8px;line-height:12.32px;color:#333;transform:translateY(0.80px) scaleX(0.8414) rotate(0.03deg);">Status</span>
<span class="t" style="left:31px;top:103px;font-size:8.8px;line-height:12.32px;color:#333;transform:translateY(0.80px) scaleX(0.8333) rotate(0.03deg);">Process Flow</span>
<span class="t" style="left:52px;top:116px;font-size:7.2px;line-height:10.08px;color:#3a3a3a;transform:translateY(0.72px) scaleX(0.9723) rotate(0.03deg);">Fatigue Analysis</span>
<span class="t" style="left:62.9px;top:126px;font-size:7.2px;line-height:10.08px;color:#3a3a3a;transform:translateY(0.12px) scaleX(0.9423) rotate(0.03deg);">Import File</span>
<span class="t" style="left:62.9px;top:135px;font-size:7.2px;line-height:10.08px;color:#3a3a3a;transform:translateY(0.42px) scaleX(0.9748) rotate(0.03deg);">Fatigue Subcase</span>
<span class="t" style="left:62.9px;top:144px;font-size:7.2px;line-height:10.08px;color:#3a3a3a;transform:translateY(0.82px) scaleX(0.9753) rotate(0.03deg);">Analysis Parameters</span>
<span class="t" style="left:62.9px;top:154px;font-size:7.2px;line-height:10.08px;color:#3a3a3a;transform:translateY(0.12px) scaleX(0.9652) rotate(0.03deg);">Elements and Materials</span>
<span class="t" style="left:61.5px;top:163px;font-size:7.2px;line-height:10.08px;color:#3a3a3a;transform:translateY(0.42px) scaleX(0.9646) rotate(0.03deg);">Loading Information</span>
<span class="t" style="left:72.9px;top:173px;font-size:7.2px;line-height:10.08px;color:#3a3a3a;transform:translateY(0.02px) scaleX(0.9836) rotate(0.03deg);">Load-Time History</span>
<span class="t" style="left:72.9px;top:182px;font-size:7.2px;line-height:10.08px;color:#3a3a3a;transform:translateY(0.32px) scaleX(0.9823) rotate(0.03deg);">Loading Sequence</span>
<span class="t" style="left:62.9px;top:191px;font-size:7.2px;line-height:10.08px;color:#3a3a3a;transform:translateY(0.62px) scaleX(0.9657) rotate(0.03deg);">Submit Analysis</span>
<span class="t" style="left:62.9px;top:200px;font-size:7.2px;line-height:10.08px;color:#3a3a3a;transform:translateY(0.92px) scaleX(0.9741) rotate(0.03deg);">Post Processing</span>
<span class="t" style="left:209px;top:408px;font-size:8.8px;line-height:12.32px;color:#333;transform:translateY(0.90px) scaleX(0.8701) rotate(0.03deg);">L-T Name</span>
<span class="t" style="left:510.5px;top:408px;font-size:8.8px;line-height:12.32px;color:#333;transform:translateY(0.90px) scaleX(0.8891) rotate(0.03deg);">Num. of pts</span>
<span class="t" style="left:209px;top:421px;font-size:7.3px;line-height:10.22px;color:#444;transform:translateY(0.12px) scaleX(0.9355) rotate(0.03deg);">LTH1</span>
<span class="t" style="left:209px;top:431px;font-size:7.3px;line-height:10.22px;color:#444;transform:translateY(0.62px) scaleX(0.9585) rotate(0.03deg);">LTH2</span>
<span class="t" style="left:523px;top:421px;font-size:7.3px;line-height:10.22px;color:#444;transform:translateY(0.12px) scaleX(1.0160) rotate(0.03deg);">2545</span>
<span class="t" style="left:523px;top:431px;font-size:7.3px;line-height:10.22px;color:#444;transform:translateY(0.62px) scaleX(1.0160) rotate(0.03deg);">2545</span>
<span class="t" style="left:200px;top:421px;font-size:7px;line-height:9.8px;color:#666;transform:translateY(0.02px) scaleX(0.7670) rotate(0.03deg);">1</span>
<span class="t" style="left:199.8px;top:431px;font-size:7px;line-height:9.8px;color:#666;transform:translateY(0.52px) scaleX(0.8693) rotate(0.03deg);">2</span>
<span class="t" style="left:676.7px;top:405px;font-size:7.5px;line-height:10.5px;color:#3c3c3c;transform:translateY(0.92px) scaleX(0.9212) rotate(0.03deg);">Show Min and Max Values</span>
<span class="t" style="left:683.9px;top:418px;font-size:7.5px;line-height:10.5px;color:#909090;transform:translateY(0.22px) scaleX(0.9215) rotate(0.03deg);">Read RPC &amp; DAC files using ASSIGN</span>
<span class="t" style="left:682px;top:434px;font-size:7.5px;line-height:10.5px;color:#3c3c3c;transform:translateY(0.22px) scaleX(0.9097) rotate(0.03deg);">Plot L-T</span>
<span class="t" style="left:739.8px;top:434px;font-size:7.5px;line-height:10.5px;color:#3c3c3c;transform:translateY(0.22px) scaleX(0.9681) rotate(0.03deg);">Delete</span>
<span class="t" style="left:676px;top:447px;font-size:7.5px;line-height:10.5px;color:#3c3c3c;transform:translateY(0.82px) scaleX(0.9484) rotate(0.03deg);">Add by File</span>
<span class="t" style="left:727px;top:447px;font-size:7.5px;line-height:10.5px;color:#3c3c3c;transform:translateY(0.82px) scaleX(0.9620) rotate(0.03deg);">Add by Values</span>
<span class="t" style="left:676.7px;top:461px;font-size:7.5px;line-height:10.5px;color:#3c3c3c;transform:translateY(0.42px) scaleX(0.9242) rotate(0.03deg);">Edit by File</span>
<span class="t" style="left:727.6px;top:461px;font-size:7.5px;line-height:10.5px;color:#3c3c3c;transform:translateY(0.42px) scaleX(0.9494) rotate(0.03deg);">Edit by Values</span>
<span class="t" style="left:671.3px;top:475px;font-size:7.5px;line-height:10.5px;color:#3c3c3c;transform:translateY(0.02px) scaleX(0.9570) rotate(0.03deg);">Add by Folder</span>
<span class="t" style="left:737.8px;top:475px;font-size:7.5px;line-height:10.5px;color:#3c3c3c;transform:translateY(0.02px) scaleX(0.9402) rotate(0.03deg);">Refresh</span>
<span class="t" style="left:837px;top:421px;font-size:7.5px;line-height:10.5px;color:#3c3c3c;transform:translateY(0.32px) scaleX(0.9589) rotate(0.03deg);">Apply</span>
<span class="t" style="left:839px;top:436px;font-size:7.5px;line-height:10.5px;color:#3c3c3c;transform:translateY(0.92px) scaleX(0.9723) rotate(0.03deg);">Prev</span>
<span class="t" style="left:839px;top:452px;font-size:7.5px;line-height:10.5px;color:#3c3c3c;transform:translateY(0.52px) scaleX(0.9723) rotate(0.03deg);">Next</span>
<span class="t" style="left:406px;top:382px;font-size:7.2px;line-height:10.08px;color:#333;transform:translateY(0.52px) scaleX(0.9255) rotate(0.03deg);">Auto</span>
<span class="t" style="left:524.7px;top:382px;font-size:7.2px;line-height:10.08px;color:#333;transform:translateY(0.52px) scaleX(0.9504) rotate(0.03deg);">By Comp</span>
</div></body></html>
